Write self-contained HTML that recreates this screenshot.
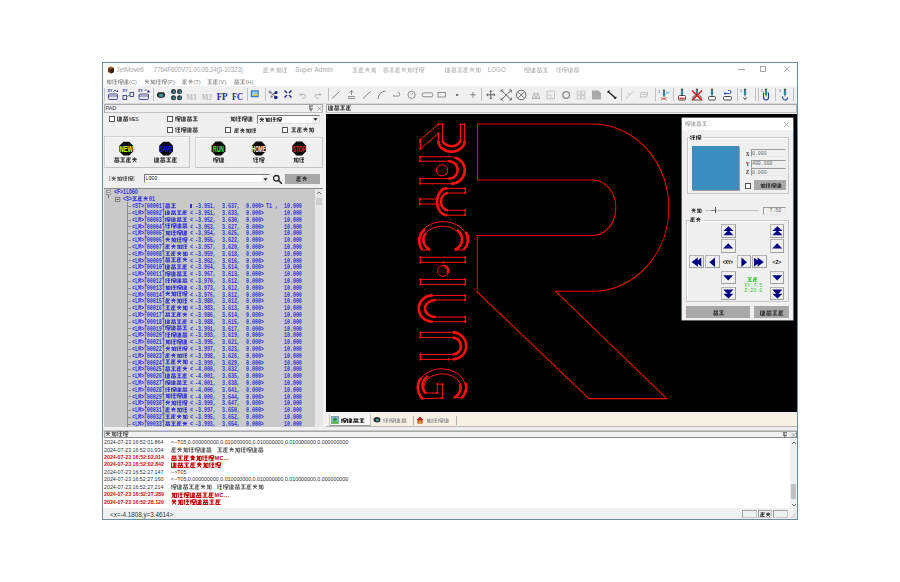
<!DOCTYPE html><html><head><meta charset="utf-8"><style>
html,body{margin:0;padding:0;background:#fff;}
body{width:900px;height:582px;position:relative;overflow:hidden;font-family:"Liberation Sans",sans-serif;}
.a{position:absolute;white-space:nowrap;}
.cj{display:inline-block;vertical-align:middle;}
.mono{font-family:"Liberation Mono",monospace;}
.serif{font-family:"Liberation Serif",serif;}
</style></head><body>
<div class="a" style="left:102px;top:62px;width:696px;height:458px;box-sizing:border-box;border:1px solid #6b8e9b;background:#f0f0f0;"></div>
<div class="a" style="left:103px;top:63px;width:694px;height:23px;background:#fff;"></div>
<svg class="a" style="left:107px;top:66px" width="8" height="8" viewBox="0 0 8 8"><path d="M1 2 L4 0.5 L7 2 L7 6 L4 7.5 L1 6Z" fill="#5a3416"/><path d="M4 3 L7 2 L7 6 L4 7.5Z" fill="#2b1a0c"/><path d="M1 2 L4 0.5 L7 2 L4 3Z" fill="#a0643a"/></svg>
<div class="a " style="left:116.5px;top:66px;font-size:6.3px;color:#a8a8a8;line-height:8px;">JetMove6</div>
<div class="a " style="left:153.8px;top:66px;font-size:6.3px;color:#a8a8a8;line-height:8px;letter-spacing:-0.15px;">7764F600V71.00.05.24(&beta;-10323)</div>
<div class="a " style="left:262.9px;top:66px;font-size:6.3px;color:#a8a8a8;line-height:8px;letter-spacing:0.15px"><svg class="cj" width="24.80" height="6.01" style="opacity:0.609;vertical-align:top;margin-top:0.99px;" fill="none" stroke="#999" stroke-width="1.5"><path transform="translate(0.00,0) scale(0.601)" d="M1 1.8h8M5 0.8v8.4M2 5h6M1 9h8M2.5 2.8l-1.5 6"/><path transform="translate(6.20,0) scale(0.601)" d="M2 1.5l6 7.5M8 1.5l-6 7.5M1 4.5h8M5 0.6v4"/><path transform="translate(12.40,0) scale(0.601)" d="M1 3h4v6M3 1v7l-2 1.5M6 2h3v7h-3z"/><path transform="translate(18.60,0) scale(0.601)" d="M2 0.8l-1.2 3M1.8 2.5v7M4 1.5h5M4 4.5h5M6.5 1.5v8M4 9h5"/></svg><span style="display:inline-block;width:7.6px"></span>Super Admin</div>
<div class="a " style="left:351.6px;top:66px;font-size:6.3px;color:#a8a8a8;line-height:8px;"><svg class="cj" width="24.80" height="6.01" style="opacity:0.609;vertical-align:top;margin-top:0.99px;" fill="none" stroke="#999" stroke-width="1.5"><path transform="translate(0.00,0) scale(0.601)" d="M1 1.6h8M5 1.6v7M0.6 8.6h8.8M2.5 5h5"/><path transform="translate(6.20,0) scale(0.601)" d="M1 1.8h8M5 0.8v8.4M2 5h6M1 9h8M2.5 2.8l-1.5 6"/><path transform="translate(12.40,0) scale(0.601)" d="M2 1.5l6 7.5M8 1.5l-6 7.5M1 4.5h8M5 0.6v4"/><path transform="translate(18.60,0) scale(0.601)" d="M1 3h4v6M3 1v7l-2 1.5M6 2h3v7h-3z"/></svg><span style="display:inline-block;width:7px"></span><svg class="cj" width="41.65" height="5.77" style="opacity:0.609;vertical-align:top;margin-top:1.11px;" fill="none" stroke="#999" stroke-width="1.5"><path transform="translate(0.00,0) scale(0.577)" d="M0.8 2h8.4M3 0.8v4M7 0.8v4M1.5 5.5h7v3.5h-7zM5 5.5v3.5"/><path transform="translate(5.95,0) scale(0.577)" d="M1 1.6h8M5 1.6v7M0.6 8.6h8.8M2.5 5h5"/><path transform="translate(11.90,0) scale(0.577)" d="M1 1.8h8M5 0.8v8.4M2 5h6M1 9h8M2.5 2.8l-1.5 6"/><path transform="translate(17.85,0) scale(0.577)" d="M2 1.5l6 7.5M8 1.5l-6 7.5M1 4.5h8M5 0.6v4"/><path transform="translate(23.80,0) scale(0.577)" d="M1 3h4v6M3 1v7l-2 1.5M6 2h3v7h-3z"/><path transform="translate(29.75,0) scale(0.577)" d="M2 0.8l-1.2 3M1.8 2.5v7M4 1.5h5M4 4.5h5M6.5 1.5v8M4 9h5"/><path transform="translate(35.70,0) scale(0.577)" d="M1.5 1v8M0.3 3.5h3M4 1.2h5v3.6h-5zM4 6.2h5M6.5 6.2v3M4 9h5"/></svg></div>
<div class="a " style="left:444.7px;top:66px;font-size:6.3px;color:#a8a8a8;line-height:8px;"><svg class="cj" width="36.00" height="5.82" style="opacity:0.609;vertical-align:top;margin-top:1.09px;" fill="none" stroke="#999" stroke-width="1.5"><path transform="translate(0.00,0) scale(0.582)" d="M1 1v8h8M3 2h5v3h-5M5.5 1v8M3 7h6"/><path transform="translate(6.00,0) scale(0.582)" d="M0.8 2h8.4M3 0.8v4M7 0.8v4M1.5 5.5h7v3.5h-7zM5 5.5v3.5"/><path transform="translate(12.00,0) scale(0.582)" d="M1 1.6h8M5 1.6v7M0.6 8.6h8.8M2.5 5h5"/><path transform="translate(18.00,0) scale(0.582)" d="M1 1.8h8M5 0.8v8.4M2 5h6M1 9h8M2.5 2.8l-1.5 6"/><path transform="translate(24.00,0) scale(0.582)" d="M2 1.5l6 7.5M8 1.5l-6 7.5M1 4.5h8M5 0.6v4"/><path transform="translate(30.00,0) scale(0.582)" d="M1 3h4v6M3 1v7l-2 1.5M6 2h3v7h-3z"/></svg><span style="display:inline-block;width:7px"></span>LOGO</div>
<div class="a " style="left:523.7px;top:66px;font-size:6.3px;color:#a8a8a8;line-height:8px;"><svg class="cj" width="24.80" height="6.01" style="opacity:0.609;vertical-align:top;margin-top:0.99px;" fill="none" stroke="#999" stroke-width="1.5"><path transform="translate(0.00,0) scale(0.601)" d="M1.5 1v8M0.3 3.5h3M4 1.2h5v3.6h-5zM4 6.2h5M6.5 6.2v3M4 9h5"/><path transform="translate(6.20,0) scale(0.601)" d="M1 1v8h8M3 2h5v3h-5M5.5 1v8M3 7h6"/><path transform="translate(12.40,0) scale(0.601)" d="M0.8 2h8.4M3 0.8v4M7 0.8v4M1.5 5.5h7v3.5h-7zM5 5.5v3.5"/><path transform="translate(18.60,0) scale(0.601)" d="M1 1.6h8M5 1.6v7M0.6 8.6h8.8M2.5 5h5"/></svg><span style="display:inline-block;width:8px"></span><svg class="cj" width="23.60" height="5.72" style="opacity:0.609;vertical-align:top;margin-top:1.14px;" fill="none" stroke="#999" stroke-width="1.5"><path transform="translate(0.00,0) scale(0.572)" d="M2 0.8l-1.2 3M1.8 2.5v7M4 1.5h5M4 4.5h5M6.5 1.5v8M4 9h5"/><path transform="translate(5.90,0) scale(0.572)" d="M1.5 1v8M0.3 3.5h3M4 1.2h5v3.6h-5zM4 6.2h5M6.5 6.2v3M4 9h5"/><path transform="translate(11.80,0) scale(0.572)" d="M1 1v8h8M3 2h5v3h-5M5.5 1v8M3 7h6"/><path transform="translate(17.70,0) scale(0.572)" d="M0.8 2h8.4M3 0.8v4M7 0.8v4M1.5 5.5h7v3.5h-7zM5 5.5v3.5"/></svg></div>
<div class="a" style="left:738px;top:69px;width:7px;height:0.8px;background:#aaa;"></div>
<div class="a" style="left:760px;top:66px;width:6px;height:6px;box-sizing:border-box;border:0.8px solid #aaa;"></div>
<svg class="a" style="left:783px;top:65px" width="8" height="8"><path d="M1 1L7 7M7 1L1 7" stroke="#aaa" stroke-width="0.8"/></svg>
<div class="a " style="left:105.8px;top:77.8px;font-size:5.8px;color:#888;line-height:8px;"><svg class="cj" width="23.20" height="5.63" style="opacity:0.725;vertical-align:top;margin-top:1.19px;" fill="none" stroke="#707070" stroke-width="1.5"><path transform="translate(0.00,0) scale(0.563)" d="M1 3h4v6M3 1v7l-2 1.5M6 2h3v7h-3z"/><path transform="translate(5.80,0) scale(0.563)" d="M2 0.8l-1.2 3M1.8 2.5v7M4 1.5h5M4 4.5h5M6.5 1.5v8M4 9h5"/><path transform="translate(11.60,0) scale(0.563)" d="M1.5 1v8M0.3 3.5h3M4 1.2h5v3.6h-5zM4 6.2h5M6.5 6.2v3M4 9h5"/><path transform="translate(17.40,0) scale(0.563)" d="M1 1v8h8M3 2h5v3h-5M5.5 1v8M3 7h6"/></svg>(C)</div>
<div class="a " style="left:144px;top:77.8px;font-size:5.8px;color:#888;line-height:8px;"><svg class="cj" width="23.20" height="5.63" style="opacity:0.725;vertical-align:top;margin-top:1.19px;" fill="none" stroke="#707070" stroke-width="1.5"><path transform="translate(0.00,0) scale(0.563)" d="M2 1.5l6 7.5M8 1.5l-6 7.5M1 4.5h8M5 0.6v4"/><path transform="translate(5.80,0) scale(0.563)" d="M1 3h4v6M3 1v7l-2 1.5M6 2h3v7h-3z"/><path transform="translate(11.60,0) scale(0.563)" d="M2 0.8l-1.2 3M1.8 2.5v7M4 1.5h5M4 4.5h5M6.5 1.5v8M4 9h5"/><path transform="translate(17.40,0) scale(0.563)" d="M1.5 1v8M0.3 3.5h3M4 1.2h5v3.6h-5zM4 6.2h5M6.5 6.2v3M4 9h5"/></svg>(P)</div>
<div class="a " style="left:181.8px;top:77.8px;font-size:5.8px;color:#888;line-height:8px;"><svg class="cj" width="11.60" height="5.63" style="opacity:0.725;vertical-align:top;margin-top:1.19px;" fill="none" stroke="#707070" stroke-width="1.5"><path transform="translate(0.00,0) scale(0.563)" d="M1 1.8h8M5 0.8v8.4M2 5h6M1 9h8M2.5 2.8l-1.5 6"/><path transform="translate(5.80,0) scale(0.563)" d="M2 1.5l6 7.5M8 1.5l-6 7.5M1 4.5h8M5 0.6v4"/></svg>(T)</div>
<div class="a " style="left:207px;top:77.8px;font-size:5.8px;color:#888;line-height:8px;"><svg class="cj" width="11.60" height="5.63" style="opacity:0.725;vertical-align:top;margin-top:1.19px;" fill="none" stroke="#707070" stroke-width="1.5"><path transform="translate(0.00,0) scale(0.563)" d="M1 1.6h8M5 1.6v7M0.6 8.6h8.8M2.5 5h5"/><path transform="translate(5.80,0) scale(0.563)" d="M1 1.8h8M5 0.8v8.4M2 5h6M1 9h8M2.5 2.8l-1.5 6"/></svg>(V)</div>
<div class="a " style="left:233.8px;top:77.8px;font-size:5.8px;color:#888;line-height:8px;"><svg class="cj" width="11.60" height="5.63" style="opacity:0.725;vertical-align:top;margin-top:1.19px;" fill="none" stroke="#707070" stroke-width="1.5"><path transform="translate(0.00,0) scale(0.563)" d="M0.8 2h8.4M3 0.8v4M7 0.8v4M1.5 5.5h7v3.5h-7zM5 5.5v3.5"/><path transform="translate(5.80,0) scale(0.563)" d="M1 1.6h8M5 1.6v7M0.6 8.6h8.8M2.5 5h5"/></svg>(H)</div>
<div class="a" style="left:103px;top:86px;width:694px;height:17px;background:#f0f0f0;"></div>
<div class="a" style="left:103px;top:103px;width:694px;height:1px;background:#d8d8d8;"></div>
<div class="a" style="left:104px;top:88px;width:1px;height:13px;background:#c8c8c8;"></div>
<div class="a" style="left:153px;top:88px;width:1px;height:13px;background:#c0c0c0;"></div>
<div class="a" style="left:246.7px;top:88px;width:1px;height:13px;background:#c0c0c0;"></div>
<div class="a" style="left:264.7px;top:88px;width:1px;height:13px;background:#c0c0c0;"></div>
<div class="a" style="left:327.5px;top:88px;width:1px;height:13px;background:#c0c0c0;"></div>
<div class="a" style="left:481.3px;top:88px;width:1px;height:13px;background:#c0c0c0;"></div>
<div class="a" style="left:620.8px;top:88px;width:1px;height:13px;background:#c0c0c0;"></div>
<div class="a" style="left:655px;top:88px;width:1px;height:13px;background:#c0c0c0;"></div>
<div class="a" style="left:672.5px;top:88px;width:1px;height:13px;background:#c0c0c0;"></div>
<div class="a" style="left:736.7px;top:88px;width:1px;height:13px;background:#c0c0c0;"></div>
<div class="a" style="left:754.7px;top:88px;width:1px;height:13px;background:#c0c0c0;"></div>
<div class="a" style="left:757.5px;top:88px;width:1px;height:13px;background:#c0c0c0;"></div>
<div class="a" style="left:775px;top:88px;width:1px;height:13px;background:#c0c0c0;"></div>
<div class="a" style="left:793.3px;top:88px;width:1px;height:13px;background:#c0c0c0;"></div>
<svg class="a" style="left:0;top:0" width="900" height="582"><text x="107.5" y="92.3" font-size="3.6" font-weight="bold" fill="#1a1a8c" font-family="Liberation Sans">XY</text><path d="M113.5 91.5l1.5-1.2 1.5 1.2M117.5 90v2" stroke="#1a1a8c" stroke-width="0.9" fill="none"/><rect x="108.5" y="94" width="9" height="5.5" rx="1" fill="#e8e8f0" stroke="#3a3a90" stroke-width="0.9"/><path d="M108.5 96h9" stroke="#3a3a90" stroke-width="0.7"/><text x="122.5" y="92.3" font-size="3.6" font-weight="bold" fill="#1a1a8c" font-family="Liberation Sans">XY</text><rect x="123" y="95.5" width="3.5" height="4" fill="none" stroke="#3a3a90" stroke-width="0.9"/><rect x="130" y="92.5" width="3.5" height="4" fill="none" stroke="#3a3a90" stroke-width="0.9"/><path d="M126.5 97l3.5-2.5" stroke="#2a8a6a" stroke-width="0.8"/><text x="138" y="92.3" font-size="3.6" font-weight="bold" fill="#1a1a8c" font-family="Liberation Sans">XY</text><path d="M145 91c0-1 1-1.3 1.6-.8" stroke="#1a1a8c" stroke-width="0.8" fill="none"/><rect x="147.5" y="90.5" width="2" height="2" fill="#1a1a8c"/><rect x="139" y="94" width="9.5" height="5.5" rx="1" fill="#e8e8f0" stroke="#3a3a90" stroke-width="0.9"/><path d="M139 96h9.5" stroke="#3a3a90" stroke-width="0.7"/><ellipse cx="161" cy="95" rx="4.2" ry="3" fill="#333"/><ellipse cx="161.2" cy="95.5" rx="2.2" ry="1.4" fill="#3aa0a8"/><path d="M158 92.5h6" stroke="#555" stroke-width="0.8"/><circle cx="173.5" cy="91.5" r="2.5" fill="#333"/><circle cx="173.8" cy="91.7" r="1.2" fill="#2a9aa0"/><circle cx="179.5" cy="91.5" r="2.5" fill="#333"/><circle cx="179.8" cy="91.7" r="1.2" fill="#2a9aa0"/><circle cx="173.5" cy="97.8" r="2.5" fill="#333"/><circle cx="173.8" cy="98.0" r="1.2" fill="#2a9aa0"/><circle cx="179.5" cy="97.8" r="2.5" fill="#333"/><circle cx="179.8" cy="98.0" r="1.2" fill="#2a9aa0"/><text x="186" y="100" font-size="9.2" font-weight="bold" fill="#bcbcbc" font-family="Liberation Serif" textLength="10.7" lengthAdjust="spacingAndGlyphs">M1</text><text x="201.7" y="100" font-size="9.2" font-weight="bold" fill="#bcbcbc" font-family="Liberation Serif" textLength="10.3" lengthAdjust="spacingAndGlyphs">M2</text><text x="216.7" y="100" font-size="9.6" font-weight="bold" fill="#1e1e9a" font-family="Liberation Serif" textLength="10.8" lengthAdjust="spacingAndGlyphs">FP</text><text x="232" y="100" font-size="9.6" font-weight="bold" fill="#1e1e9a" font-family="Liberation Serif" textLength="11" lengthAdjust="spacingAndGlyphs">FC</text><rect x="250.8" y="90.3" width="7.9" height="7" fill="#2a7ad0"/><rect x="252" y="91.5" width="5.5" height="4.6" fill="#8fd0f0"/><path d="M252 96l2-2 1.5 1.2 2-1.8v2.7z" fill="#e0c030"/><path d="M269.5 91.5l3 2.5 3.5-1M272.5 94l3 3" stroke="#556" stroke-width="0.9" fill="none"/><circle cx="270" cy="92" r="1.5" fill="#889"/><circle cx="276" cy="92.5" r="1.6" fill="#1a1a8c"/><circle cx="275.8" cy="97.5" r="1.8" fill="#1a1a8c"/><circle cx="271.5" cy="96.5" r="1.2" fill="#889"/><path d="M284.5 90.5l2.5 2.5M291.5 90.5l-2.5 2.5M284.5 97.5l2.5-2.5M291.5 97.5l-2.5-2.5" stroke="#1a1a8c" stroke-width="1.3"/><path d="M300 94.5h4a1.8 1.8 0 0 1 0 3.6h-2M300 94.5l1.5-1.5M300 94.5l1.5 1.5" stroke="#aaa" stroke-width="0.8" fill="none"/><path d="M321 94.5h-4a1.8 1.8 0 0 0 0 3.6h2M321 94.5l-1.5-1.5M321 94.5l-1.5 1.5" stroke="#aaa" stroke-width="0.8" fill="none"/><path d="M332 98.5l7.5-7" stroke="#777" stroke-width="0.9"/><path d="M351.5 90.5v4.5M349.5 92.5l2-2 2 2M348 96.5h7M348 98.5h7" stroke="#777" stroke-width="0.8" fill="none"/><path d="M363 98.5l7.5-7" stroke="#777" stroke-width="0.9"/><path d="M378 99a8 8 0 0 1 7.5-8" stroke="#777" stroke-width="0.9" fill="none"/><path d="M398 92.5a1.8 1.8 0 0 1 0 3.6h-4.5v-1" stroke="#777" stroke-width="0.8" fill="none"/><circle cx="411.6" cy="94.8" r="3.6" stroke="#777" stroke-width="0.8" fill="none"/><path d="M411.6 95l1.2-2" stroke="#777" stroke-width="0.7"/><rect x="422" y="92.8" width="11" height="4" rx="2" stroke="#777" stroke-width="0.8" fill="none"/><rect x="438" y="92.5" width="7.5" height="4.5" stroke="#777" stroke-width="0.8" fill="none"/><rect x="456" y="94" width="2.2" height="2" fill="#777"/><path d="M473 92v5.6M470.2 94.8h5.6" stroke="#777" stroke-width="0.9"/><path d="M490.8 90.5v8.5M486.7 94.8h8.3M489.5 91.8l1.3-1.3 1.3 1.3M489.5 97.8l1.3 1.3 1.3-1.3M488 93.5l-1.3 1.3 1.3 1.3M493.6 93.5l1.3 1.3-1.3 1.3" stroke="#555" stroke-width="0.9" fill="none"/><path d="M501.5 90.5l9.5 9M511 90.5l-9.5 9" stroke="#555" stroke-width="0.9"/><path d="M501 90h2.5M501 90v2.5M511.5 90h-2.5M511.5 90v2.5M501 100h2.5M501 100v-2.5M511.5 100h-2.5M511.5 100v-2.5" stroke="#555" stroke-width="0.7"/><circle cx="521.2" cy="95" r="4.8" stroke="#555" stroke-width="0.9" fill="none"/><path d="M518 91.8l6.4 6.4M524.4 91.8l-6.4 6.4" stroke="#555" stroke-width="0.8"/><path d="M532 98.5l2.5-6 1 6zM536.5 98.5l1-6 2.5 6z" stroke="#999" stroke-width="0.7" fill="none"/><rect x="547" y="91" width="7.6" height="7.8" stroke="#bbb" stroke-width="0.8" fill="none"/><path d="M547 95h4v3.8" stroke="#bbb" stroke-width="0.7" fill="none"/><circle cx="566.2" cy="95" r="3.3" stroke="#888" stroke-width="1.3" fill="none"/><rect x="577" y="91" width="3.3" height="3.3" stroke="#bbb" stroke-width="0.7" fill="none"/><rect x="581.7" y="91" width="3.3" height="3.3" stroke="#bbb" stroke-width="0.7" fill="none"/><rect x="577" y="95.7" width="3.3" height="3.3" stroke="#bbb" stroke-width="0.7" fill="none"/><rect x="581.7" y="95.7" width="3.3" height="3.3" stroke="#bbb" stroke-width="0.7" fill="none"/><path d="M592 90.5h6.5l2.5 2.5v6.5h-9z" fill="#aaa"/><path d="M608 91.5l8 7" stroke="#222" stroke-width="1.4"/><path d="M607.5 92.5l2-2M614 98.5l2.5-1.5" stroke="#222" stroke-width="1.2"/><path d="M626 98.5l7.5-7" stroke="#aaa" stroke-width="0.8" stroke-dasharray="2 1"/><path d="M628 93l2 2" stroke="#aaa" stroke-width="0.7"/><path d="M641 92.5h6.5l-1 4.5h-6.5z" stroke="#aaa" stroke-width="0.7" fill="none"/><path d="M642 94.5h6" stroke="#aaa" stroke-width="0.6"/><text x="658.3" y="92.5" font-size="3.6" fill="#1a1a8c" font-family="Liberation Sans">1</text><circle cx="664" cy="90.7" r="1.2" fill="#555"/><path d="M664 91.5v6" stroke="#444" stroke-width="0.8"/><ellipse cx="664" cy="94.0" rx="1.3" ry="2.2" fill="#2a8a9a"/><path d="M661 97.5l5.5 2.5M666.5 97.5l-5.5 2.5" stroke="#d03030" stroke-width="0.7"/><path d="M666 91.5h4l-1.5 2.5h-2.5z" fill="#9ad0e8"/><circle cx="682" cy="89.7" r="1.2" fill="#555"/><path d="M682 90.5v6" stroke="#444" stroke-width="0.8"/><ellipse cx="682" cy="93.0" rx="1.3" ry="2.2" fill="#2a8a9a"/><rect x="678.5" y="95.5" width="7" height="4.5" rx="1" fill="#fff" stroke="#333" stroke-width="0.9"/><rect x="679.5" y="97.5" width="5" height="2" fill="#e05050"/><circle cx="697" cy="89.7" r="1.2" fill="#555"/><path d="M697 90.5v6" stroke="#444" stroke-width="0.8"/><ellipse cx="697" cy="93.0" rx="1.3" ry="2.2" fill="#2a8a9a"/><rect x="693" y="96" width="8" height="4" rx="1" fill="#fff" stroke="#333" stroke-width="0.9"/><path d="M692 90.5l10 10M702 90.5l-10 10" stroke="#ee1010" stroke-width="1.4"/><circle cx="712" cy="89.7" r="1.2" fill="#555"/><path d="M712 90.5v6" stroke="#444" stroke-width="0.8"/><ellipse cx="712" cy="93.0" rx="1.3" ry="2.2" fill="#2a8a9a"/><rect x="708.5" y="96.5" width="7" height="3.5" rx="1.2" fill="#fff" stroke="#333" stroke-width="0.9"/><rect x="723.5" y="96.5" width="8" height="3.5" rx="1.2" fill="#fff" stroke="#333" stroke-width="0.9"/><path d="M724 93.5h5.5a1.5 1.5 0 0 0 0-3h-1.5M724 93.5l1.5-1.2M724 93.5l1.5 1.2" stroke="#1a3ab0" stroke-width="0.9" fill="none"/><text x="740" y="92" font-size="3.6" fill="#1a1a8c" font-family="Liberation Sans">1</text><circle cx="745" cy="89.7" r="1.2" fill="#555"/><path d="M745 90.5v6" stroke="#444" stroke-width="0.8"/><ellipse cx="745" cy="93.0" rx="1.3" ry="2.2" fill="#2a8a9a"/><path d="M743.5 97.5l1.5 2 1.5-2" stroke="#222" stroke-width="0.9" fill="none"/><text x="760.8" y="92" font-size="3.6" fill="#1a1a8c" font-family="Liberation Sans">1</text><circle cx="766" cy="89.7" r="1.2" fill="#555"/><path d="M766 90.5v6" stroke="#444" stroke-width="0.8"/><ellipse cx="766" cy="93.0" rx="1.3" ry="2.2" fill="#2a8a9a"/><path d="M763.5 92.5v5a2.5 2.5 0 0 0 5 0v-5" stroke="#1a3ab0" stroke-width="1.1" fill="none"/><text x="779" y="92" font-size="3.6" fill="#1a1a8c" font-family="Liberation Sans">1</text><circle cx="785" cy="89.7" r="1.2" fill="#555"/><path d="M785 90.5v6" stroke="#444" stroke-width="0.8"/><ellipse cx="785" cy="93.0" rx="1.3" ry="2.2" fill="#2a8a9a"/><path d="M783 96.5a2.4 2.4 0 1 0 4.5 1" stroke="#1a3ab0" stroke-width="1.1" fill="none"/></svg>
<div class="a" style="left:104px;top:104px;width:219px;height:8.5px;box-sizing:border-box;border:1px solid #a8a8a8;border-right-color:#b0b0b0;border-bottom:1.5px solid #c2c2c2;background:#f0f0f0;"></div>
<div class="a " style="left:105.5px;top:105px;font-size:5.4px;line-height:7px;color:#334;">PAD</div>
<svg class="a" style="left:306px;top:105px" width="17" height="7"><path d="M3 1h4M4 1v3M3 4h4M5 4v2.5" stroke="#555" stroke-width="1"/><path d="M11.5 1.5l4 4M15.5 1.5l-4 4" stroke="#888" stroke-width="0.7"/></svg>
<div class="a" style="left:109px;top:116.2px;width:6px;height:6px;box-sizing:border-box;border:1px solid #555;background:#fff;"></div>
<div class="a " style="left:117.3px;top:115.7px;font-size:5.6px;line-height:7px;color:#222;"><svg class="cj" width="11.60" height="5.63" style="opacity:0.87;vertical-align:top;margin-top:0.69px;" fill="none" stroke="#222" stroke-width="1.7"><path transform="translate(0.00,0) scale(0.563)" d="M1 1v8h8M3 2h5v3h-5M5.5 1v8M3 7h6"/><path transform="translate(5.80,0) scale(0.563)" d="M0.8 2h8.4M3 0.8v4M7 0.8v4M1.5 5.5h7v3.5h-7zM5 5.5v3.5"/></svg><span style="font-size:4.6px;letter-spacing:-0.2px">MES</span></div>
<div class="a" style="left:166.5px;top:116.2px;width:6px;height:6px;box-sizing:border-box;border:1px solid #555;background:#fff;"></div>
<div class="a " style="left:174.7px;top:115.7px;font-size:5.6px;line-height:7px;color:#222;"><svg class="cj" width="23.20" height="5.63" style="opacity:0.87;vertical-align:top;margin-top:0.69px;" fill="none" stroke="#222" stroke-width="1.7"><path transform="translate(0.00,0) scale(0.563)" d="M1.5 1v8M0.3 3.5h3M4 1.2h5v3.6h-5zM4 6.2h5M6.5 6.2v3M4 9h5"/><path transform="translate(5.80,0) scale(0.563)" d="M1 1v8h8M3 2h5v3h-5M5.5 1v8M3 7h6"/><path transform="translate(11.60,0) scale(0.563)" d="M0.8 2h8.4M3 0.8v4M7 0.8v4M1.5 5.5h7v3.5h-7zM5 5.5v3.5"/><path transform="translate(17.40,0) scale(0.563)" d="M1 1.6h8M5 1.6v7M0.6 8.6h8.8M2.5 5h5"/></svg></div>
<div class="a" style="left:166.5px;top:127.3px;width:6px;height:6px;box-sizing:border-box;border:1px solid #555;background:#fff;"></div>
<div class="a " style="left:174.7px;top:126.8px;font-size:5.6px;line-height:7px;color:#222;"><svg class="cj" width="23.20" height="5.63" style="opacity:0.87;vertical-align:top;margin-top:0.69px;" fill="none" stroke="#222" stroke-width="1.7"><path transform="translate(0.00,0) scale(0.563)" d="M2 0.8l-1.2 3M1.8 2.5v7M4 1.5h5M4 4.5h5M6.5 1.5v8M4 9h5"/><path transform="translate(5.80,0) scale(0.563)" d="M1.5 1v8M0.3 3.5h3M4 1.2h5v3.6h-5zM4 6.2h5M6.5 6.2v3M4 9h5"/><path transform="translate(11.60,0) scale(0.563)" d="M1 1v8h8M3 2h5v3h-5M5.5 1v8M3 7h6"/><path transform="translate(17.40,0) scale(0.563)" d="M0.8 2h8.4M3 0.8v4M7 0.8v4M1.5 5.5h7v3.5h-7zM5 5.5v3.5"/></svg></div>
<div class="a " style="left:230px;top:115.7px;font-size:5.6px;line-height:7px;color:#222;"><svg class="cj" width="23.20" height="5.63" style="opacity:0.87;vertical-align:top;margin-top:0.69px;" fill="none" stroke="#222" stroke-width="1.7"><path transform="translate(0.00,0) scale(0.563)" d="M1 3h4v6M3 1v7l-2 1.5M6 2h3v7h-3z"/><path transform="translate(5.80,0) scale(0.563)" d="M2 0.8l-1.2 3M1.8 2.5v7M4 1.5h5M4 4.5h5M6.5 1.5v8M4 9h5"/><path transform="translate(11.60,0) scale(0.563)" d="M1.5 1v8M0.3 3.5h3M4 1.2h5v3.6h-5zM4 6.2h5M6.5 6.2v3M4 9h5"/><path transform="translate(17.40,0) scale(0.563)" d="M1 1v8h8M3 2h5v3h-5M5.5 1v8M3 7h6"/></svg></div>
<div class="a" style="left:256.7px;top:115px;width:63px;height:8.7px;box-sizing:border-box;border:1px solid #7a7a7a;border-bottom-color:#e0e0e0;border-right-color:#e0e0e0;background:#fff;"></div>
<div class="a " style="left:258.7px;top:115.9px;font-size:5.6px;line-height:7px;color:#222;"><svg class="cj" width="23.20" height="5.63" style="opacity:0.9425;vertical-align:top;margin-top:0.69px;" fill="none" stroke="#222" stroke-width="1.7"><path transform="translate(0.00,0) scale(0.563)" d="M2 1.5l6 7.5M8 1.5l-6 7.5M1 4.5h8M5 0.6v4"/><path transform="translate(5.80,0) scale(0.563)" d="M1 3h4v6M3 1v7l-2 1.5M6 2h3v7h-3z"/><path transform="translate(11.60,0) scale(0.563)" d="M2 0.8l-1.2 3M1.8 2.5v7M4 1.5h5M4 4.5h5M6.5 1.5v8M4 9h5"/><path transform="translate(17.40,0) scale(0.563)" d="M1.5 1v8M0.3 3.5h3M4 1.2h5v3.6h-5zM4 6.2h5M6.5 6.2v3M4 9h5"/></svg></div>
<div class="a" style="left:312px;top:116px;width:6.8px;height:6.8px;background:#f0f0f0;"></div>
<svg class="a" style="left:313px;top:118px" width="5" height="3"><path d="M0.5 0.3h4l-2 2.4z" fill="#111"/></svg>
<div class="a" style="left:224.7px;top:127.3px;width:6px;height:6px;box-sizing:border-box;border:1px solid #555;background:#fff;"></div>
<div class="a " style="left:233.7px;top:126.8px;font-size:5.6px;line-height:7px;color:#222;"><svg class="cj" width="22.80" height="5.53" style="opacity:0.87;vertical-align:top;margin-top:0.74px;" fill="none" stroke="#222" stroke-width="1.7"><path transform="translate(0.00,0) scale(0.553)" d="M1 1.8h8M5 0.8v8.4M2 5h6M1 9h8M2.5 2.8l-1.5 6"/><path transform="translate(5.70,0) scale(0.553)" d="M2 1.5l6 7.5M8 1.5l-6 7.5M1 4.5h8M5 0.6v4"/><path transform="translate(11.40,0) scale(0.553)" d="M1 3h4v6M3 1v7l-2 1.5M6 2h3v7h-3z"/><path transform="translate(17.10,0) scale(0.553)" d="M2 0.8l-1.2 3M1.8 2.5v7M4 1.5h5M4 4.5h5M6.5 1.5v8M4 9h5"/></svg></div>
<div class="a" style="left:282px;top:127.3px;width:6px;height:6px;box-sizing:border-box;border:1px solid #555;background:#fff;"></div>
<div class="a " style="left:290.7px;top:126.8px;font-size:5.6px;line-height:7px;color:#222;"><svg class="cj" width="23.20" height="5.63" style="opacity:0.87;vertical-align:top;margin-top:0.69px;" fill="none" stroke="#222" stroke-width="1.7"><path transform="translate(0.00,0) scale(0.563)" d="M1 1.6h8M5 1.6v7M0.6 8.6h8.8M2.5 5h5"/><path transform="translate(5.80,0) scale(0.563)" d="M1 1.8h8M5 0.8v8.4M2 5h6M1 9h8M2.5 2.8l-1.5 6"/><path transform="translate(11.60,0) scale(0.563)" d="M2 1.5l6 7.5M8 1.5l-6 7.5M1 4.5h8M5 0.6v4"/><path transform="translate(17.40,0) scale(0.563)" d="M1 3h4v6M3 1v7l-2 1.5M6 2h3v7h-3z"/></svg></div>
<div class="a" style="left:103.7px;top:136.4px;width:86px;height:32px;box-sizing:border-box;border:1px solid #d0d0d0;border-right-color:#c4c4c4;border-bottom-color:#c4c4c4;box-shadow:inset 1px 1px 0 #fafafa;"></div>
<div class="a" style="left:195.4px;top:136.5px;width:127.6px;height:31.7px;box-sizing:border-box;border:1px solid #d0d0d0;border-right-color:#c4c4c4;border-bottom-color:#c4c4c4;box-shadow:inset 1px 1px 0 #fafafa;"></div>
<svg class="a" style="left:0;top:0" width="900" height="582"><polygon points="133.23,151.47 129.17,155.53 123.43,155.53 119.37,151.47 119.37,145.73 123.43,141.67 129.17,141.67 133.23,145.73" fill="#0a0a0a"/><text x="126.3" y="151.7" text-anchor="middle" font-size="8.4" font-weight="bold" fill="#ffff00" font-family="Liberation Sans" textLength="13" lengthAdjust="spacingAndGlyphs">NEW</text><polygon points="173.03,151.47 168.97,155.53 163.23,155.53 159.17,151.47 159.17,145.73 163.23,141.67 168.97,141.67 173.03,145.73" fill="#0a0a0a"/><text x="166.1" y="151.7" text-anchor="middle" font-size="8.4" font-weight="bold" fill="#1818ff" font-family="Liberation Sans" textLength="13" lengthAdjust="spacingAndGlyphs">SAVE</text><polygon points="225.43,151.37 221.37,155.43 215.63,155.43 211.57,151.37 211.57,145.63 215.63,141.57 221.37,141.57 225.43,145.63" fill="#0a0a0a"/><text x="218.5" y="151.6" text-anchor="middle" font-size="8.4" font-weight="bold" fill="#20ff20" font-family="Liberation Sans" textLength="11" lengthAdjust="spacingAndGlyphs">RUN</text><polygon points="265.73,151.37 261.67,155.43 255.93,155.43 251.87,151.37 251.87,145.63 255.93,141.57 261.67,141.57 265.73,145.63" fill="#0a0a0a"/><text x="258.8" y="151.6" text-anchor="middle" font-size="8.4" font-weight="bold" fill="#ffffff" font-family="Liberation Sans" textLength="14" lengthAdjust="spacingAndGlyphs">HOME</text><polygon points="306.13,151.37 302.07,155.43 296.33,155.43 292.27,151.37 292.27,145.63 296.33,141.57 302.07,141.57 306.13,145.63" fill="#0a0a0a"/><text x="299.2" y="151.6" text-anchor="middle" font-size="8.4" font-weight="bold" fill="#ff1818" font-family="Liberation Sans" textLength="13" lengthAdjust="spacingAndGlyphs">STOP</text></svg>
<div class="a " style="left:114.4px;top:156.5px;font-size:5.6px;line-height:7px;color:#222;"><svg class="cj" width="23.60" height="5.72" style="opacity:0.899;vertical-align:top;margin-top:0.64px;" fill="none" stroke="#222" stroke-width="1.7"><path transform="translate(0.00,0) scale(0.572)" d="M0.8 2h8.4M3 0.8v4M7 0.8v4M1.5 5.5h7v3.5h-7zM5 5.5v3.5"/><path transform="translate(5.90,0) scale(0.572)" d="M1 1.6h8M5 1.6v7M0.6 8.6h8.8M2.5 5h5"/><path transform="translate(11.80,0) scale(0.572)" d="M1 1.8h8M5 0.8v8.4M2 5h6M1 9h8M2.5 2.8l-1.5 6"/><path transform="translate(17.70,0) scale(0.572)" d="M2 1.5l6 7.5M8 1.5l-6 7.5M1 4.5h8M5 0.6v4"/></svg></div>
<div class="a " style="left:154.4px;top:156.5px;font-size:5.6px;line-height:7px;color:#222;"><svg class="cj" width="23.60" height="5.72" style="opacity:0.899;vertical-align:top;margin-top:0.64px;" fill="none" stroke="#222" stroke-width="1.7"><path transform="translate(0.00,0) scale(0.572)" d="M1 1v8h8M3 2h5v3h-5M5.5 1v8M3 7h6"/><path transform="translate(5.90,0) scale(0.572)" d="M0.8 2h8.4M3 0.8v4M7 0.8v4M1.5 5.5h7v3.5h-7zM5 5.5v3.5"/><path transform="translate(11.80,0) scale(0.572)" d="M1 1.6h8M5 1.6v7M0.6 8.6h8.8M2.5 5h5"/><path transform="translate(17.70,0) scale(0.572)" d="M1 1.8h8M5 0.8v8.4M2 5h6M1 9h8M2.5 2.8l-1.5 6"/></svg></div>
<div class="a " style="left:213px;top:156.5px;font-size:5.6px;line-height:7px;color:#222;"><svg class="cj" width="11.80" height="5.72" style="opacity:0.899;vertical-align:top;margin-top:0.64px;" fill="none" stroke="#222" stroke-width="1.7"><path transform="translate(0.00,0) scale(0.572)" d="M1.5 1v8M0.3 3.5h3M4 1.2h5v3.6h-5zM4 6.2h5M6.5 6.2v3M4 9h5"/><path transform="translate(5.90,0) scale(0.572)" d="M1 1v8h8M3 2h5v3h-5M5.5 1v8M3 7h6"/></svg></div>
<div class="a " style="left:253px;top:156.5px;font-size:5.6px;line-height:7px;color:#222;"><svg class="cj" width="11.80" height="5.72" style="opacity:0.899;vertical-align:top;margin-top:0.64px;" fill="none" stroke="#222" stroke-width="1.7"><path transform="translate(0.00,0) scale(0.572)" d="M2 0.8l-1.2 3M1.8 2.5v7M4 1.5h5M4 4.5h5M6.5 1.5v8M4 9h5"/><path transform="translate(5.90,0) scale(0.572)" d="M1.5 1v8M0.3 3.5h3M4 1.2h5v3.6h-5zM4 6.2h5M6.5 6.2v3M4 9h5"/></svg></div>
<div class="a " style="left:293.4px;top:156.5px;font-size:5.6px;line-height:7px;color:#222;"><svg class="cj" width="11.80" height="5.72" style="opacity:0.899;vertical-align:top;margin-top:0.64px;" fill="none" stroke="#222" stroke-width="1.7"><path transform="translate(0.00,0) scale(0.572)" d="M1 3h4v6M3 1v7l-2 1.5M6 2h3v7h-3z"/><path transform="translate(5.90,0) scale(0.572)" d="M2 0.8l-1.2 3M1.8 2.5v7M4 1.5h5M4 4.5h5M6.5 1.5v8M4 9h5"/></svg></div>
<div class="a " style="left:109px;top:175.3px;font-size:5.6px;line-height:7px;color:#222;"><span style="color:#444">[</span><svg class="cj" width="22.40" height="5.43" style="opacity:0.7975;vertical-align:top;margin-top:0.78px;" fill="none" stroke="#333" stroke-width="1.7"><path transform="translate(0.00,0) scale(0.543)" d="M2 1.5l6 7.5M8 1.5l-6 7.5M1 4.5h8M5 0.6v4"/><path transform="translate(5.60,0) scale(0.543)" d="M1 3h4v6M3 1v7l-2 1.5M6 2h3v7h-3z"/><path transform="translate(11.20,0) scale(0.543)" d="M2 0.8l-1.2 3M1.8 2.5v7M4 1.5h5M4 4.5h5M6.5 1.5v8M4 9h5"/><path transform="translate(16.80,0) scale(0.543)" d="M1.5 1v8M0.3 3.5h3M4 1.2h5v3.6h-5zM4 6.2h5M6.5 6.2v3M4 9h5"/></svg><span style="color:#444">]</span></div>
<div class="a" style="left:143.7px;top:174px;width:126px;height:9px;box-sizing:border-box;border:1px solid #7a7a7a;border-bottom-color:#e8e8e8;border-right-color:#e8e8e8;background:#fff;"></div>
<div class="a " style="left:145.5px;top:175.6px;font-family:Liberation Mono,monospace;font-size:4.8px;line-height:6px;color:#111;">LOGO</div>
<div class="a" style="left:261.5px;top:175px;width:7px;height:7px;background:#f0f0f0;"></div>
<svg class="a" style="left:262.5px;top:177.5px" width="5" height="3"><path d="M0.5 0.3h4l-2 2.4z" fill="#111"/></svg>
<svg class="a" style="left:272px;top:173.5px" width="11" height="11"><circle cx="4.3" cy="4.3" r="2.8" stroke="#222" stroke-width="1.3" fill="none"/><path d="M6.3 6.3l3.5 3.5" stroke="#222" stroke-width="1.6"/></svg>
<div class="a" style="left:284.9px;top:174px;width:35px;height:9.7px;background:#a8a8a8;"></div>
<div class="a " style="left:296px;top:175.8px;font-size:5.6px;line-height:7px;color:#222;"><svg class="cj" width="11.60" height="5.63" style="opacity:0.87;vertical-align:top;margin-top:0.69px;" fill="none" stroke="#222" stroke-width="1.7"><path transform="translate(0.00,0) scale(0.563)" d="M1 1.8h8M5 0.8v8.4M2 5h6M1 9h8M2.5 2.8l-1.5 6"/><path transform="translate(5.80,0) scale(0.563)" d="M2 1.5l6 7.5M8 1.5l-6 7.5M1 4.5h8M5 0.6v4"/></svg></div>
<div class="a" style="left:104px;top:187.5px;width:219px;height:239.5px;background:#c9c9c9;"></div>
<div class="a" style="left:104px;top:187.5px;width:219px;height:1px;background:#8a8a8a;"></div>
<div class="a" style="left:315px;top:188.5px;width:8px;height:238px;background:#e6e6e6;"></div>
<svg class="a" style="left:316px;top:191px" width="6" height="4"><path d="M1 3l2-2 2 2" stroke="#555" stroke-width="0.8" fill="none"/></svg>
<div class="a" style="left:315.8px;top:197.5px;width:6.7px;height:7.5px;background:#cdcdcd;"></div>
<div class="a" style="left:104px;top:188.5px;width:211px;height:238.5px;overflow:hidden"><div style="position:relative;left:-104px;top:-188.5px;width:900px;height:582px"><svg class="a" style="left:105.8px;top:190px" width="5.5" height="5"><rect x="0.5" y="0.5" width="4.4" height="4" fill="#d4d4d4" stroke="#8c8c8c" stroke-width="0.8"/><path d="M1.5 2.5h2.4" stroke="#777" stroke-width="0.8"/></svg><div class="a" style="left:113.9px;top:190px;font-family:Liberation Mono,monospace;font-size:6px;line-height:6px;color:#3030e0;transform:scale(0.826,1.18);transform-origin:0 50%;font-weight:bold;">&lt;F&gt;1LOGO</div><div class="a" style="left:108.2px;top:194.8px;width:0;height:2.5px;border-left:0.8px dotted #777"></div><svg class="a" style="left:115.2px;top:197px" width="5.5" height="5"><rect x="0.5" y="0.5" width="4.4" height="4" fill="#d4d4d4" stroke="#6c6c6c" stroke-width="0.8"/><path d="M1.5 2.5h2.4" stroke="#333" stroke-width="0.8"/></svg><div class="a" style="left:123.3px;top:197px;font-family:Liberation Mono,monospace;font-size:6px;line-height:6px;color:#3030e0;transform:scale(0.826,1.18);transform-origin:0 50%;font-weight:bold;">&lt;S&gt;</div><div class="a" style="left:132.2px;top:196.23px;line-height:0"><svg class="cj" width="16.50" height="5.33" style="opacity:1.0;vertical-align:top;margin-top:0.00px;" fill="none" stroke="#3030e0" stroke-width="1.7"><path transform="translate(0.00,0) scale(0.533)" d="M1 1.6h8M5 1.6v7M0.6 8.6h8.8M2.5 5h5"/><path transform="translate(5.50,0) scale(0.533)" d="M1 1.8h8M5 0.8v8.4M2 5h6M1 9h8M2.5 2.8l-1.5 6"/><path transform="translate(11.00,0) scale(0.533)" d="M2 1.5l6 7.5M8 1.5l-6 7.5M1 4.5h8M5 0.6v4"/></svg></div><div class="a" style="left:148.6px;top:197px;font-family:Liberation Mono,monospace;font-size:6px;line-height:6px;color:#3030e0;transform:scale(0.826,1.18);transform-origin:0 50%;font-weight:bold;">01</div><div class="a" style="left:126.5px;top:201.5px;width:0;height:226px;border-left:0.9px solid #8c8c8c"></div><div class="a" style="left:127px;top:205.9px;width:4px;height:0.8px;background:#8c8c8c"></div><div class="a" style="left:132.2px;top:204.1px;font-family:Liberation Mono,monospace;font-size:6px;line-height:6px;color:#3030e0;transform:scale(0.826,1.18);transform-origin:0 50%;font-weight:bold;">&lt;ST&gt;[00001]</div><div class="a" style="left:165.3px;top:203.04px;line-height:0"><svg class="cj" width="11.40" height="5.53" style="opacity:1.0;vertical-align:top;margin-top:0.00px;" fill="none" stroke="#3030e0" stroke-width="1.7"><path transform="translate(0.00,0) scale(0.553)" d="M0.8 2h8.4M3 0.8v4M7 0.8v4M1.5 5.5h7v3.5h-7zM5 5.5v3.5"/><path transform="translate(5.70,0) scale(0.553)" d="M1 1.6h8M5 1.6v7M0.6 8.6h8.8M2.5 5h5"/></svg></div><div class="a" style="left:190px;top:204.3px;width:2.4px;height:4.2px;background:#3030e0"></div><div class="a" style="left:265.9px;top:204.1px;font-family:Liberation Mono,monospace;font-size:6px;line-height:6px;color:#3030e0;transform:scale(0.826,1.18);transform-origin:0 50%;font-weight:bold;">T1 ,</div><div class="a" style="left:195.3px;top:204.1px;font-family:Liberation Mono,monospace;font-size:6px;line-height:6px;color:#3030e0;transform:scale(0.826,1.18);transform-origin:0 50%;font-weight:bold;">-3.951,</div><div class="a" style="left:222.2px;top:204.1px;font-family:Liberation Mono,monospace;font-size:6px;line-height:6px;color:#3030e0;transform:scale(0.826,1.18);transform-origin:0 50%;font-weight:bold;">3.637,</div><div class="a" style="left:245.5px;top:204.1px;font-family:Liberation Mono,monospace;font-size:6px;line-height:6px;color:#3030e0;transform:scale(0.826,1.18);transform-origin:0 50%;font-weight:bold;">0.000&gt;</div><div class="a" style="left:284.2px;top:204.1px;font-family:Liberation Mono,monospace;font-size:6px;line-height:6px;color:#3030e0;transform:scale(0.826,1.18);transform-origin:0 50%;font-weight:bold;">10.000</div><div class="a" style="left:127px;top:212.7px;width:4px;height:0.8px;background:#8c8c8c"></div><div class="a" style="left:132.2px;top:210.9px;font-family:Liberation Mono,monospace;font-size:6px;line-height:6px;color:#3030e0;transform:scale(0.826,1.18);transform-origin:0 50%;font-weight:bold;">&lt;LM&gt;[00002]</div><div class="a" style="left:165.3px;top:209.84px;line-height:0"><svg class="cj" width="22.80" height="5.53" style="opacity:1.0;vertical-align:top;margin-top:0.00px;" fill="none" stroke="#3030e0" stroke-width="1.7"><path transform="translate(0.00,0) scale(0.553)" d="M1 1v8h8M3 2h5v3h-5M5.5 1v8M3 7h6"/><path transform="translate(5.70,0) scale(0.553)" d="M0.8 2h8.4M3 0.8v4M7 0.8v4M1.5 5.5h7v3.5h-7zM5 5.5v3.5"/><path transform="translate(11.40,0) scale(0.553)" d="M1 1.6h8M5 1.6v7M0.6 8.6h8.8M2.5 5h5"/><path transform="translate(17.10,0) scale(0.553)" d="M1 1.8h8M5 0.8v8.4M2 5h6M1 9h8M2.5 2.8l-1.5 6"/></svg></div><div class="a" style="left:190.3px;top:210.9px;font-family:Liberation Mono,monospace;font-size:6px;line-height:6px;color:#3030e0;transform:scale(0.826,1.18);transform-origin:0 50%;font-weight:bold;">&lt;</div><div class="a" style="left:195.3px;top:210.9px;font-family:Liberation Mono,monospace;font-size:6px;line-height:6px;color:#3030e0;transform:scale(0.826,1.18);transform-origin:0 50%;font-weight:bold;">-3.951,</div><div class="a" style="left:222.2px;top:210.9px;font-family:Liberation Mono,monospace;font-size:6px;line-height:6px;color:#3030e0;transform:scale(0.826,1.18);transform-origin:0 50%;font-weight:bold;">3.633,</div><div class="a" style="left:245.5px;top:210.9px;font-family:Liberation Mono,monospace;font-size:6px;line-height:6px;color:#3030e0;transform:scale(0.826,1.18);transform-origin:0 50%;font-weight:bold;">0.000&gt;</div><div class="a" style="left:284.2px;top:210.9px;font-family:Liberation Mono,monospace;font-size:6px;line-height:6px;color:#3030e0;transform:scale(0.826,1.18);transform-origin:0 50%;font-weight:bold;">10.000</div><div class="a" style="left:127px;top:219.5px;width:4px;height:0.8px;background:#8c8c8c"></div><div class="a" style="left:132.2px;top:217.7px;font-family:Liberation Mono,monospace;font-size:6px;line-height:6px;color:#3030e0;transform:scale(0.826,1.18);transform-origin:0 50%;font-weight:bold;">&lt;LM&gt;[00003]</div><div class="a" style="left:165.3px;top:216.64px;line-height:0"><svg class="cj" width="22.80" height="5.53" style="opacity:1.0;vertical-align:top;margin-top:0.00px;" fill="none" stroke="#3030e0" stroke-width="1.7"><path transform="translate(0.00,0) scale(0.553)" d="M1.5 1v8M0.3 3.5h3M4 1.2h5v3.6h-5zM4 6.2h5M6.5 6.2v3M4 9h5"/><path transform="translate(5.70,0) scale(0.553)" d="M1 1v8h8M3 2h5v3h-5M5.5 1v8M3 7h6"/><path transform="translate(11.40,0) scale(0.553)" d="M0.8 2h8.4M3 0.8v4M7 0.8v4M1.5 5.5h7v3.5h-7zM5 5.5v3.5"/><path transform="translate(17.10,0) scale(0.553)" d="M1 1.6h8M5 1.6v7M0.6 8.6h8.8M2.5 5h5"/></svg></div><div class="a" style="left:190.3px;top:217.7px;font-family:Liberation Mono,monospace;font-size:6px;line-height:6px;color:#3030e0;transform:scale(0.826,1.18);transform-origin:0 50%;font-weight:bold;">&lt;</div><div class="a" style="left:195.3px;top:217.7px;font-family:Liberation Mono,monospace;font-size:6px;line-height:6px;color:#3030e0;transform:scale(0.826,1.18);transform-origin:0 50%;font-weight:bold;">-3.952,</div><div class="a" style="left:222.2px;top:217.7px;font-family:Liberation Mono,monospace;font-size:6px;line-height:6px;color:#3030e0;transform:scale(0.826,1.18);transform-origin:0 50%;font-weight:bold;">3.630,</div><div class="a" style="left:245.5px;top:217.7px;font-family:Liberation Mono,monospace;font-size:6px;line-height:6px;color:#3030e0;transform:scale(0.826,1.18);transform-origin:0 50%;font-weight:bold;">0.000&gt;</div><div class="a" style="left:284.2px;top:217.7px;font-family:Liberation Mono,monospace;font-size:6px;line-height:6px;color:#3030e0;transform:scale(0.826,1.18);transform-origin:0 50%;font-weight:bold;">10.000</div><div class="a" style="left:127px;top:226.3px;width:4px;height:0.8px;background:#8c8c8c"></div><div class="a" style="left:132.2px;top:224.5px;font-family:Liberation Mono,monospace;font-size:6px;line-height:6px;color:#3030e0;transform:scale(0.826,1.18);transform-origin:0 50%;font-weight:bold;">&lt;LM&gt;[00004]</div><div class="a" style="left:165.3px;top:223.44px;line-height:0"><svg class="cj" width="22.80" height="5.53" style="opacity:1.0;vertical-align:top;margin-top:0.00px;" fill="none" stroke="#3030e0" stroke-width="1.7"><path transform="translate(0.00,0) scale(0.553)" d="M2 0.8l-1.2 3M1.8 2.5v7M4 1.5h5M4 4.5h5M6.5 1.5v8M4 9h5"/><path transform="translate(5.70,0) scale(0.553)" d="M1.5 1v8M0.3 3.5h3M4 1.2h5v3.6h-5zM4 6.2h5M6.5 6.2v3M4 9h5"/><path transform="translate(11.40,0) scale(0.553)" d="M1 1v8h8M3 2h5v3h-5M5.5 1v8M3 7h6"/><path transform="translate(17.10,0) scale(0.553)" d="M0.8 2h8.4M3 0.8v4M7 0.8v4M1.5 5.5h7v3.5h-7zM5 5.5v3.5"/></svg></div><div class="a" style="left:190.3px;top:224.5px;font-family:Liberation Mono,monospace;font-size:6px;line-height:6px;color:#3030e0;transform:scale(0.826,1.18);transform-origin:0 50%;font-weight:bold;">&lt;</div><div class="a" style="left:195.3px;top:224.5px;font-family:Liberation Mono,monospace;font-size:6px;line-height:6px;color:#3030e0;transform:scale(0.826,1.18);transform-origin:0 50%;font-weight:bold;">-3.953,</div><div class="a" style="left:222.2px;top:224.5px;font-family:Liberation Mono,monospace;font-size:6px;line-height:6px;color:#3030e0;transform:scale(0.826,1.18);transform-origin:0 50%;font-weight:bold;">3.627,</div><div class="a" style="left:245.5px;top:224.5px;font-family:Liberation Mono,monospace;font-size:6px;line-height:6px;color:#3030e0;transform:scale(0.826,1.18);transform-origin:0 50%;font-weight:bold;">0.000&gt;</div><div class="a" style="left:284.2px;top:224.5px;font-family:Liberation Mono,monospace;font-size:6px;line-height:6px;color:#3030e0;transform:scale(0.826,1.18);transform-origin:0 50%;font-weight:bold;">10.000</div><div class="a" style="left:127px;top:233.1px;width:4px;height:0.8px;background:#8c8c8c"></div><div class="a" style="left:132.2px;top:231.3px;font-family:Liberation Mono,monospace;font-size:6px;line-height:6px;color:#3030e0;transform:scale(0.826,1.18);transform-origin:0 50%;font-weight:bold;">&lt;LM&gt;[00005]</div><div class="a" style="left:165.3px;top:230.24px;line-height:0"><svg class="cj" width="22.80" height="5.53" style="opacity:1.0;vertical-align:top;margin-top:0.00px;" fill="none" stroke="#3030e0" stroke-width="1.7"><path transform="translate(0.00,0) scale(0.553)" d="M1 3h4v6M3 1v7l-2 1.5M6 2h3v7h-3z"/><path transform="translate(5.70,0) scale(0.553)" d="M2 0.8l-1.2 3M1.8 2.5v7M4 1.5h5M4 4.5h5M6.5 1.5v8M4 9h5"/><path transform="translate(11.40,0) scale(0.553)" d="M1.5 1v8M0.3 3.5h3M4 1.2h5v3.6h-5zM4 6.2h5M6.5 6.2v3M4 9h5"/><path transform="translate(17.10,0) scale(0.553)" d="M1 1v8h8M3 2h5v3h-5M5.5 1v8M3 7h6"/></svg></div><div class="a" style="left:190.3px;top:231.3px;font-family:Liberation Mono,monospace;font-size:6px;line-height:6px;color:#3030e0;transform:scale(0.826,1.18);transform-origin:0 50%;font-weight:bold;">&lt;</div><div class="a" style="left:195.3px;top:231.3px;font-family:Liberation Mono,monospace;font-size:6px;line-height:6px;color:#3030e0;transform:scale(0.826,1.18);transform-origin:0 50%;font-weight:bold;">-3.954,</div><div class="a" style="left:222.2px;top:231.3px;font-family:Liberation Mono,monospace;font-size:6px;line-height:6px;color:#3030e0;transform:scale(0.826,1.18);transform-origin:0 50%;font-weight:bold;">3.625,</div><div class="a" style="left:245.5px;top:231.3px;font-family:Liberation Mono,monospace;font-size:6px;line-height:6px;color:#3030e0;transform:scale(0.826,1.18);transform-origin:0 50%;font-weight:bold;">0.000&gt;</div><div class="a" style="left:284.2px;top:231.3px;font-family:Liberation Mono,monospace;font-size:6px;line-height:6px;color:#3030e0;transform:scale(0.826,1.18);transform-origin:0 50%;font-weight:bold;">10.000</div><div class="a" style="left:127px;top:239.9px;width:4px;height:0.8px;background:#8c8c8c"></div><div class="a" style="left:132.2px;top:238.1px;font-family:Liberation Mono,monospace;font-size:6px;line-height:6px;color:#3030e0;transform:scale(0.826,1.18);transform-origin:0 50%;font-weight:bold;">&lt;LM&gt;[00006]</div><div class="a" style="left:165.3px;top:237.04px;line-height:0"><svg class="cj" width="22.80" height="5.53" style="opacity:1.0;vertical-align:top;margin-top:0.00px;" fill="none" stroke="#3030e0" stroke-width="1.7"><path transform="translate(0.00,0) scale(0.553)" d="M2 1.5l6 7.5M8 1.5l-6 7.5M1 4.5h8M5 0.6v4"/><path transform="translate(5.70,0) scale(0.553)" d="M1 3h4v6M3 1v7l-2 1.5M6 2h3v7h-3z"/><path transform="translate(11.40,0) scale(0.553)" d="M2 0.8l-1.2 3M1.8 2.5v7M4 1.5h5M4 4.5h5M6.5 1.5v8M4 9h5"/><path transform="translate(17.10,0) scale(0.553)" d="M1.5 1v8M0.3 3.5h3M4 1.2h5v3.6h-5zM4 6.2h5M6.5 6.2v3M4 9h5"/></svg></div><div class="a" style="left:190.3px;top:238.1px;font-family:Liberation Mono,monospace;font-size:6px;line-height:6px;color:#3030e0;transform:scale(0.826,1.18);transform-origin:0 50%;font-weight:bold;">&lt;</div><div class="a" style="left:195.3px;top:238.1px;font-family:Liberation Mono,monospace;font-size:6px;line-height:6px;color:#3030e0;transform:scale(0.826,1.18);transform-origin:0 50%;font-weight:bold;">-3.955,</div><div class="a" style="left:222.2px;top:238.1px;font-family:Liberation Mono,monospace;font-size:6px;line-height:6px;color:#3030e0;transform:scale(0.826,1.18);transform-origin:0 50%;font-weight:bold;">3.622,</div><div class="a" style="left:245.5px;top:238.1px;font-family:Liberation Mono,monospace;font-size:6px;line-height:6px;color:#3030e0;transform:scale(0.826,1.18);transform-origin:0 50%;font-weight:bold;">0.000&gt;</div><div class="a" style="left:284.2px;top:238.1px;font-family:Liberation Mono,monospace;font-size:6px;line-height:6px;color:#3030e0;transform:scale(0.826,1.18);transform-origin:0 50%;font-weight:bold;">10.000</div><div class="a" style="left:127px;top:246.7px;width:4px;height:0.8px;background:#8c8c8c"></div><div class="a" style="left:132.2px;top:244.9px;font-family:Liberation Mono,monospace;font-size:6px;line-height:6px;color:#3030e0;transform:scale(0.826,1.18);transform-origin:0 50%;font-weight:bold;">&lt;LM&gt;[00007]</div><div class="a" style="left:165.3px;top:243.84px;line-height:0"><svg class="cj" width="22.80" height="5.53" style="opacity:1.0;vertical-align:top;margin-top:0.00px;" fill="none" stroke="#3030e0" stroke-width="1.7"><path transform="translate(0.00,0) scale(0.553)" d="M1 1.8h8M5 0.8v8.4M2 5h6M1 9h8M2.5 2.8l-1.5 6"/><path transform="translate(5.70,0) scale(0.553)" d="M2 1.5l6 7.5M8 1.5l-6 7.5M1 4.5h8M5 0.6v4"/><path transform="translate(11.40,0) scale(0.553)" d="M1 3h4v6M3 1v7l-2 1.5M6 2h3v7h-3z"/><path transform="translate(17.10,0) scale(0.553)" d="M2 0.8l-1.2 3M1.8 2.5v7M4 1.5h5M4 4.5h5M6.5 1.5v8M4 9h5"/></svg></div><div class="a" style="left:190.3px;top:244.9px;font-family:Liberation Mono,monospace;font-size:6px;line-height:6px;color:#3030e0;transform:scale(0.826,1.18);transform-origin:0 50%;font-weight:bold;">&lt;</div><div class="a" style="left:195.3px;top:244.9px;font-family:Liberation Mono,monospace;font-size:6px;line-height:6px;color:#3030e0;transform:scale(0.826,1.18);transform-origin:0 50%;font-weight:bold;">-3.957,</div><div class="a" style="left:222.2px;top:244.9px;font-family:Liberation Mono,monospace;font-size:6px;line-height:6px;color:#3030e0;transform:scale(0.826,1.18);transform-origin:0 50%;font-weight:bold;">3.620,</div><div class="a" style="left:245.5px;top:244.9px;font-family:Liberation Mono,monospace;font-size:6px;line-height:6px;color:#3030e0;transform:scale(0.826,1.18);transform-origin:0 50%;font-weight:bold;">0.000&gt;</div><div class="a" style="left:284.2px;top:244.9px;font-family:Liberation Mono,monospace;font-size:6px;line-height:6px;color:#3030e0;transform:scale(0.826,1.18);transform-origin:0 50%;font-weight:bold;">10.000</div><div class="a" style="left:127px;top:253.5px;width:4px;height:0.8px;background:#8c8c8c"></div><div class="a" style="left:132.2px;top:251.7px;font-family:Liberation Mono,monospace;font-size:6px;line-height:6px;color:#3030e0;transform:scale(0.826,1.18);transform-origin:0 50%;font-weight:bold;">&lt;LM&gt;[00008]</div><div class="a" style="left:165.3px;top:250.64px;line-height:0"><svg class="cj" width="22.80" height="5.53" style="opacity:1.0;vertical-align:top;margin-top:0.00px;" fill="none" stroke="#3030e0" stroke-width="1.7"><path transform="translate(0.00,0) scale(0.553)" d="M1 1.6h8M5 1.6v7M0.6 8.6h8.8M2.5 5h5"/><path transform="translate(5.70,0) scale(0.553)" d="M1 1.8h8M5 0.8v8.4M2 5h6M1 9h8M2.5 2.8l-1.5 6"/><path transform="translate(11.40,0) scale(0.553)" d="M2 1.5l6 7.5M8 1.5l-6 7.5M1 4.5h8M5 0.6v4"/><path transform="translate(17.10,0) scale(0.553)" d="M1 3h4v6M3 1v7l-2 1.5M6 2h3v7h-3z"/></svg></div><div class="a" style="left:190.3px;top:251.7px;font-family:Liberation Mono,monospace;font-size:6px;line-height:6px;color:#3030e0;transform:scale(0.826,1.18);transform-origin:0 50%;font-weight:bold;">&lt;</div><div class="a" style="left:195.3px;top:251.7px;font-family:Liberation Mono,monospace;font-size:6px;line-height:6px;color:#3030e0;transform:scale(0.826,1.18);transform-origin:0 50%;font-weight:bold;">-3.959,</div><div class="a" style="left:222.2px;top:251.7px;font-family:Liberation Mono,monospace;font-size:6px;line-height:6px;color:#3030e0;transform:scale(0.826,1.18);transform-origin:0 50%;font-weight:bold;">3.618,</div><div class="a" style="left:245.5px;top:251.7px;font-family:Liberation Mono,monospace;font-size:6px;line-height:6px;color:#3030e0;transform:scale(0.826,1.18);transform-origin:0 50%;font-weight:bold;">0.000&gt;</div><div class="a" style="left:284.2px;top:251.7px;font-family:Liberation Mono,monospace;font-size:6px;line-height:6px;color:#3030e0;transform:scale(0.826,1.18);transform-origin:0 50%;font-weight:bold;">10.000</div><div class="a" style="left:127px;top:260.3px;width:4px;height:0.8px;background:#8c8c8c"></div><div class="a" style="left:132.2px;top:258.5px;font-family:Liberation Mono,monospace;font-size:6px;line-height:6px;color:#3030e0;transform:scale(0.826,1.18);transform-origin:0 50%;font-weight:bold;">&lt;LM&gt;[00009]</div><div class="a" style="left:165.3px;top:257.44px;line-height:0"><svg class="cj" width="22.80" height="5.53" style="opacity:1.0;vertical-align:top;margin-top:0.00px;" fill="none" stroke="#3030e0" stroke-width="1.7"><path transform="translate(0.00,0) scale(0.553)" d="M0.8 2h8.4M3 0.8v4M7 0.8v4M1.5 5.5h7v3.5h-7zM5 5.5v3.5"/><path transform="translate(5.70,0) scale(0.553)" d="M1 1.6h8M5 1.6v7M0.6 8.6h8.8M2.5 5h5"/><path transform="translate(11.40,0) scale(0.553)" d="M1 1.8h8M5 0.8v8.4M2 5h6M1 9h8M2.5 2.8l-1.5 6"/><path transform="translate(17.10,0) scale(0.553)" d="M2 1.5l6 7.5M8 1.5l-6 7.5M1 4.5h8M5 0.6v4"/></svg></div><div class="a" style="left:190.3px;top:258.5px;font-family:Liberation Mono,monospace;font-size:6px;line-height:6px;color:#3030e0;transform:scale(0.826,1.18);transform-origin:0 50%;font-weight:bold;">&lt;</div><div class="a" style="left:195.3px;top:258.5px;font-family:Liberation Mono,monospace;font-size:6px;line-height:6px;color:#3030e0;transform:scale(0.826,1.18);transform-origin:0 50%;font-weight:bold;">-3.962,</div><div class="a" style="left:222.2px;top:258.5px;font-family:Liberation Mono,monospace;font-size:6px;line-height:6px;color:#3030e0;transform:scale(0.826,1.18);transform-origin:0 50%;font-weight:bold;">3.616,</div><div class="a" style="left:245.5px;top:258.5px;font-family:Liberation Mono,monospace;font-size:6px;line-height:6px;color:#3030e0;transform:scale(0.826,1.18);transform-origin:0 50%;font-weight:bold;">0.000&gt;</div><div class="a" style="left:284.2px;top:258.5px;font-family:Liberation Mono,monospace;font-size:6px;line-height:6px;color:#3030e0;transform:scale(0.826,1.18);transform-origin:0 50%;font-weight:bold;">10.000</div><div class="a" style="left:127px;top:267.1px;width:4px;height:0.8px;background:#8c8c8c"></div><div class="a" style="left:132.2px;top:265.3px;font-family:Liberation Mono,monospace;font-size:6px;line-height:6px;color:#3030e0;transform:scale(0.826,1.18);transform-origin:0 50%;font-weight:bold;">&lt;LM&gt;[00010]</div><div class="a" style="left:165.3px;top:264.24px;line-height:0"><svg class="cj" width="22.80" height="5.53" style="opacity:1.0;vertical-align:top;margin-top:0.00px;" fill="none" stroke="#3030e0" stroke-width="1.7"><path transform="translate(0.00,0) scale(0.553)" d="M1 1v8h8M3 2h5v3h-5M5.5 1v8M3 7h6"/><path transform="translate(5.70,0) scale(0.553)" d="M0.8 2h8.4M3 0.8v4M7 0.8v4M1.5 5.5h7v3.5h-7zM5 5.5v3.5"/><path transform="translate(11.40,0) scale(0.553)" d="M1 1.6h8M5 1.6v7M0.6 8.6h8.8M2.5 5h5"/><path transform="translate(17.10,0) scale(0.553)" d="M1 1.8h8M5 0.8v8.4M2 5h6M1 9h8M2.5 2.8l-1.5 6"/></svg></div><div class="a" style="left:190.3px;top:265.3px;font-family:Liberation Mono,monospace;font-size:6px;line-height:6px;color:#3030e0;transform:scale(0.826,1.18);transform-origin:0 50%;font-weight:bold;">&lt;</div><div class="a" style="left:195.3px;top:265.3px;font-family:Liberation Mono,monospace;font-size:6px;line-height:6px;color:#3030e0;transform:scale(0.826,1.18);transform-origin:0 50%;font-weight:bold;">-3.964,</div><div class="a" style="left:222.2px;top:265.3px;font-family:Liberation Mono,monospace;font-size:6px;line-height:6px;color:#3030e0;transform:scale(0.826,1.18);transform-origin:0 50%;font-weight:bold;">3.614,</div><div class="a" style="left:245.5px;top:265.3px;font-family:Liberation Mono,monospace;font-size:6px;line-height:6px;color:#3030e0;transform:scale(0.826,1.18);transform-origin:0 50%;font-weight:bold;">0.000&gt;</div><div class="a" style="left:284.2px;top:265.3px;font-family:Liberation Mono,monospace;font-size:6px;line-height:6px;color:#3030e0;transform:scale(0.826,1.18);transform-origin:0 50%;font-weight:bold;">10.000</div><div class="a" style="left:127px;top:273.9px;width:4px;height:0.8px;background:#8c8c8c"></div><div class="a" style="left:132.2px;top:272.1px;font-family:Liberation Mono,monospace;font-size:6px;line-height:6px;color:#3030e0;transform:scale(0.826,1.18);transform-origin:0 50%;font-weight:bold;">&lt;LM&gt;[00011]</div><div class="a" style="left:165.3px;top:271.04px;line-height:0"><svg class="cj" width="22.80" height="5.53" style="opacity:1.0;vertical-align:top;margin-top:0.00px;" fill="none" stroke="#3030e0" stroke-width="1.7"><path transform="translate(0.00,0) scale(0.553)" d="M1.5 1v8M0.3 3.5h3M4 1.2h5v3.6h-5zM4 6.2h5M6.5 6.2v3M4 9h5"/><path transform="translate(5.70,0) scale(0.553)" d="M1 1v8h8M3 2h5v3h-5M5.5 1v8M3 7h6"/><path transform="translate(11.40,0) scale(0.553)" d="M0.8 2h8.4M3 0.8v4M7 0.8v4M1.5 5.5h7v3.5h-7zM5 5.5v3.5"/><path transform="translate(17.10,0) scale(0.553)" d="M1 1.6h8M5 1.6v7M0.6 8.6h8.8M2.5 5h5"/></svg></div><div class="a" style="left:190.3px;top:272.1px;font-family:Liberation Mono,monospace;font-size:6px;line-height:6px;color:#3030e0;transform:scale(0.826,1.18);transform-origin:0 50%;font-weight:bold;">&lt;</div><div class="a" style="left:195.3px;top:272.1px;font-family:Liberation Mono,monospace;font-size:6px;line-height:6px;color:#3030e0;transform:scale(0.826,1.18);transform-origin:0 50%;font-weight:bold;">-3.967,</div><div class="a" style="left:222.2px;top:272.1px;font-family:Liberation Mono,monospace;font-size:6px;line-height:6px;color:#3030e0;transform:scale(0.826,1.18);transform-origin:0 50%;font-weight:bold;">3.613,</div><div class="a" style="left:245.5px;top:272.1px;font-family:Liberation Mono,monospace;font-size:6px;line-height:6px;color:#3030e0;transform:scale(0.826,1.18);transform-origin:0 50%;font-weight:bold;">0.000&gt;</div><div class="a" style="left:284.2px;top:272.1px;font-family:Liberation Mono,monospace;font-size:6px;line-height:6px;color:#3030e0;transform:scale(0.826,1.18);transform-origin:0 50%;font-weight:bold;">10.000</div><div class="a" style="left:127px;top:280.7px;width:4px;height:0.8px;background:#8c8c8c"></div><div class="a" style="left:132.2px;top:278.9px;font-family:Liberation Mono,monospace;font-size:6px;line-height:6px;color:#3030e0;transform:scale(0.826,1.18);transform-origin:0 50%;font-weight:bold;">&lt;LM&gt;[00012]</div><div class="a" style="left:165.3px;top:277.84px;line-height:0"><svg class="cj" width="22.80" height="5.53" style="opacity:1.0;vertical-align:top;margin-top:0.00px;" fill="none" stroke="#3030e0" stroke-width="1.7"><path transform="translate(0.00,0) scale(0.553)" d="M2 0.8l-1.2 3M1.8 2.5v7M4 1.5h5M4 4.5h5M6.5 1.5v8M4 9h5"/><path transform="translate(5.70,0) scale(0.553)" d="M1.5 1v8M0.3 3.5h3M4 1.2h5v3.6h-5zM4 6.2h5M6.5 6.2v3M4 9h5"/><path transform="translate(11.40,0) scale(0.553)" d="M1 1v8h8M3 2h5v3h-5M5.5 1v8M3 7h6"/><path transform="translate(17.10,0) scale(0.553)" d="M0.8 2h8.4M3 0.8v4M7 0.8v4M1.5 5.5h7v3.5h-7zM5 5.5v3.5"/></svg></div><div class="a" style="left:190.3px;top:278.9px;font-family:Liberation Mono,monospace;font-size:6px;line-height:6px;color:#3030e0;transform:scale(0.826,1.18);transform-origin:0 50%;font-weight:bold;">&lt;</div><div class="a" style="left:195.3px;top:278.9px;font-family:Liberation Mono,monospace;font-size:6px;line-height:6px;color:#3030e0;transform:scale(0.826,1.18);transform-origin:0 50%;font-weight:bold;">-3.970,</div><div class="a" style="left:222.2px;top:278.9px;font-family:Liberation Mono,monospace;font-size:6px;line-height:6px;color:#3030e0;transform:scale(0.826,1.18);transform-origin:0 50%;font-weight:bold;">3.612,</div><div class="a" style="left:245.5px;top:278.9px;font-family:Liberation Mono,monospace;font-size:6px;line-height:6px;color:#3030e0;transform:scale(0.826,1.18);transform-origin:0 50%;font-weight:bold;">0.000&gt;</div><div class="a" style="left:284.2px;top:278.9px;font-family:Liberation Mono,monospace;font-size:6px;line-height:6px;color:#3030e0;transform:scale(0.826,1.18);transform-origin:0 50%;font-weight:bold;">10.000</div><div class="a" style="left:127px;top:287.5px;width:4px;height:0.8px;background:#8c8c8c"></div><div class="a" style="left:132.2px;top:285.7px;font-family:Liberation Mono,monospace;font-size:6px;line-height:6px;color:#3030e0;transform:scale(0.826,1.18);transform-origin:0 50%;font-weight:bold;">&lt;LM&gt;[00013]</div><div class="a" style="left:165.3px;top:284.64px;line-height:0"><svg class="cj" width="22.80" height="5.53" style="opacity:1.0;vertical-align:top;margin-top:0.00px;" fill="none" stroke="#3030e0" stroke-width="1.7"><path transform="translate(0.00,0) scale(0.553)" d="M1 3h4v6M3 1v7l-2 1.5M6 2h3v7h-3z"/><path transform="translate(5.70,0) scale(0.553)" d="M2 0.8l-1.2 3M1.8 2.5v7M4 1.5h5M4 4.5h5M6.5 1.5v8M4 9h5"/><path transform="translate(11.40,0) scale(0.553)" d="M1.5 1v8M0.3 3.5h3M4 1.2h5v3.6h-5zM4 6.2h5M6.5 6.2v3M4 9h5"/><path transform="translate(17.10,0) scale(0.553)" d="M1 1v8h8M3 2h5v3h-5M5.5 1v8M3 7h6"/></svg></div><div class="a" style="left:190.3px;top:285.7px;font-family:Liberation Mono,monospace;font-size:6px;line-height:6px;color:#3030e0;transform:scale(0.826,1.18);transform-origin:0 50%;font-weight:bold;">&lt;</div><div class="a" style="left:195.3px;top:285.7px;font-family:Liberation Mono,monospace;font-size:6px;line-height:6px;color:#3030e0;transform:scale(0.826,1.18);transform-origin:0 50%;font-weight:bold;">-3.973,</div><div class="a" style="left:222.2px;top:285.7px;font-family:Liberation Mono,monospace;font-size:6px;line-height:6px;color:#3030e0;transform:scale(0.826,1.18);transform-origin:0 50%;font-weight:bold;">3.612,</div><div class="a" style="left:245.5px;top:285.7px;font-family:Liberation Mono,monospace;font-size:6px;line-height:6px;color:#3030e0;transform:scale(0.826,1.18);transform-origin:0 50%;font-weight:bold;">0.000&gt;</div><div class="a" style="left:284.2px;top:285.7px;font-family:Liberation Mono,monospace;font-size:6px;line-height:6px;color:#3030e0;transform:scale(0.826,1.18);transform-origin:0 50%;font-weight:bold;">10.000</div><div class="a" style="left:127px;top:294.3px;width:4px;height:0.8px;background:#8c8c8c"></div><div class="a" style="left:132.2px;top:292.5px;font-family:Liberation Mono,monospace;font-size:6px;line-height:6px;color:#3030e0;transform:scale(0.826,1.18);transform-origin:0 50%;font-weight:bold;">&lt;LM&gt;[00014]</div><div class="a" style="left:165.3px;top:291.44px;line-height:0"><svg class="cj" width="22.80" height="5.53" style="opacity:1.0;vertical-align:top;margin-top:0.00px;" fill="none" stroke="#3030e0" stroke-width="1.7"><path transform="translate(0.00,0) scale(0.553)" d="M2 1.5l6 7.5M8 1.5l-6 7.5M1 4.5h8M5 0.6v4"/><path transform="translate(5.70,0) scale(0.553)" d="M1 3h4v6M3 1v7l-2 1.5M6 2h3v7h-3z"/><path transform="translate(11.40,0) scale(0.553)" d="M2 0.8l-1.2 3M1.8 2.5v7M4 1.5h5M4 4.5h5M6.5 1.5v8M4 9h5"/><path transform="translate(17.10,0) scale(0.553)" d="M1.5 1v8M0.3 3.5h3M4 1.2h5v3.6h-5zM4 6.2h5M6.5 6.2v3M4 9h5"/></svg></div><div class="a" style="left:190.3px;top:292.5px;font-family:Liberation Mono,monospace;font-size:6px;line-height:6px;color:#3030e0;transform:scale(0.826,1.18);transform-origin:0 50%;font-weight:bold;">&lt;</div><div class="a" style="left:195.3px;top:292.5px;font-family:Liberation Mono,monospace;font-size:6px;line-height:6px;color:#3030e0;transform:scale(0.826,1.18);transform-origin:0 50%;font-weight:bold;">-3.976,</div><div class="a" style="left:222.2px;top:292.5px;font-family:Liberation Mono,monospace;font-size:6px;line-height:6px;color:#3030e0;transform:scale(0.826,1.18);transform-origin:0 50%;font-weight:bold;">3.612,</div><div class="a" style="left:245.5px;top:292.5px;font-family:Liberation Mono,monospace;font-size:6px;line-height:6px;color:#3030e0;transform:scale(0.826,1.18);transform-origin:0 50%;font-weight:bold;">0.000&gt;</div><div class="a" style="left:284.2px;top:292.5px;font-family:Liberation Mono,monospace;font-size:6px;line-height:6px;color:#3030e0;transform:scale(0.826,1.18);transform-origin:0 50%;font-weight:bold;">10.000</div><div class="a" style="left:127px;top:301.1px;width:4px;height:0.8px;background:#8c8c8c"></div><div class="a" style="left:132.2px;top:299.3px;font-family:Liberation Mono,monospace;font-size:6px;line-height:6px;color:#3030e0;transform:scale(0.826,1.18);transform-origin:0 50%;font-weight:bold;">&lt;LM&gt;[00015]</div><div class="a" style="left:165.3px;top:298.24px;line-height:0"><svg class="cj" width="22.80" height="5.53" style="opacity:1.0;vertical-align:top;margin-top:0.00px;" fill="none" stroke="#3030e0" stroke-width="1.7"><path transform="translate(0.00,0) scale(0.553)" d="M1 1.8h8M5 0.8v8.4M2 5h6M1 9h8M2.5 2.8l-1.5 6"/><path transform="translate(5.70,0) scale(0.553)" d="M2 1.5l6 7.5M8 1.5l-6 7.5M1 4.5h8M5 0.6v4"/><path transform="translate(11.40,0) scale(0.553)" d="M1 3h4v6M3 1v7l-2 1.5M6 2h3v7h-3z"/><path transform="translate(17.10,0) scale(0.553)" d="M2 0.8l-1.2 3M1.8 2.5v7M4 1.5h5M4 4.5h5M6.5 1.5v8M4 9h5"/></svg></div><div class="a" style="left:190.3px;top:299.3px;font-family:Liberation Mono,monospace;font-size:6px;line-height:6px;color:#3030e0;transform:scale(0.826,1.18);transform-origin:0 50%;font-weight:bold;">&lt;</div><div class="a" style="left:195.3px;top:299.3px;font-family:Liberation Mono,monospace;font-size:6px;line-height:6px;color:#3030e0;transform:scale(0.826,1.18);transform-origin:0 50%;font-weight:bold;">-3.980,</div><div class="a" style="left:222.2px;top:299.3px;font-family:Liberation Mono,monospace;font-size:6px;line-height:6px;color:#3030e0;transform:scale(0.826,1.18);transform-origin:0 50%;font-weight:bold;">3.612,</div><div class="a" style="left:245.5px;top:299.3px;font-family:Liberation Mono,monospace;font-size:6px;line-height:6px;color:#3030e0;transform:scale(0.826,1.18);transform-origin:0 50%;font-weight:bold;">0.000&gt;</div><div class="a" style="left:284.2px;top:299.3px;font-family:Liberation Mono,monospace;font-size:6px;line-height:6px;color:#3030e0;transform:scale(0.826,1.18);transform-origin:0 50%;font-weight:bold;">10.000</div><div class="a" style="left:127px;top:307.9px;width:4px;height:0.8px;background:#8c8c8c"></div><div class="a" style="left:132.2px;top:306.1px;font-family:Liberation Mono,monospace;font-size:6px;line-height:6px;color:#3030e0;transform:scale(0.826,1.18);transform-origin:0 50%;font-weight:bold;">&lt;LM&gt;[00016]</div><div class="a" style="left:165.3px;top:305.04px;line-height:0"><svg class="cj" width="22.80" height="5.53" style="opacity:1.0;vertical-align:top;margin-top:0.00px;" fill="none" stroke="#3030e0" stroke-width="1.7"><path transform="translate(0.00,0) scale(0.553)" d="M1 1.6h8M5 1.6v7M0.6 8.6h8.8M2.5 5h5"/><path transform="translate(5.70,0) scale(0.553)" d="M1 1.8h8M5 0.8v8.4M2 5h6M1 9h8M2.5 2.8l-1.5 6"/><path transform="translate(11.40,0) scale(0.553)" d="M2 1.5l6 7.5M8 1.5l-6 7.5M1 4.5h8M5 0.6v4"/><path transform="translate(17.10,0) scale(0.553)" d="M1 3h4v6M3 1v7l-2 1.5M6 2h3v7h-3z"/></svg></div><div class="a" style="left:190.3px;top:306.1px;font-family:Liberation Mono,monospace;font-size:6px;line-height:6px;color:#3030e0;transform:scale(0.826,1.18);transform-origin:0 50%;font-weight:bold;">&lt;</div><div class="a" style="left:195.3px;top:306.1px;font-family:Liberation Mono,monospace;font-size:6px;line-height:6px;color:#3030e0;transform:scale(0.826,1.18);transform-origin:0 50%;font-weight:bold;">-3.983,</div><div class="a" style="left:222.2px;top:306.1px;font-family:Liberation Mono,monospace;font-size:6px;line-height:6px;color:#3030e0;transform:scale(0.826,1.18);transform-origin:0 50%;font-weight:bold;">3.613,</div><div class="a" style="left:245.5px;top:306.1px;font-family:Liberation Mono,monospace;font-size:6px;line-height:6px;color:#3030e0;transform:scale(0.826,1.18);transform-origin:0 50%;font-weight:bold;">0.000&gt;</div><div class="a" style="left:284.2px;top:306.1px;font-family:Liberation Mono,monospace;font-size:6px;line-height:6px;color:#3030e0;transform:scale(0.826,1.18);transform-origin:0 50%;font-weight:bold;">10.000</div><div class="a" style="left:127px;top:314.7px;width:4px;height:0.8px;background:#8c8c8c"></div><div class="a" style="left:132.2px;top:312.9px;font-family:Liberation Mono,monospace;font-size:6px;line-height:6px;color:#3030e0;transform:scale(0.826,1.18);transform-origin:0 50%;font-weight:bold;">&lt;LM&gt;[00017]</div><div class="a" style="left:165.3px;top:311.84px;line-height:0"><svg class="cj" width="22.80" height="5.53" style="opacity:1.0;vertical-align:top;margin-top:0.00px;" fill="none" stroke="#3030e0" stroke-width="1.7"><path transform="translate(0.00,0) scale(0.553)" d="M0.8 2h8.4M3 0.8v4M7 0.8v4M1.5 5.5h7v3.5h-7zM5 5.5v3.5"/><path transform="translate(5.70,0) scale(0.553)" d="M1 1.6h8M5 1.6v7M0.6 8.6h8.8M2.5 5h5"/><path transform="translate(11.40,0) scale(0.553)" d="M1 1.8h8M5 0.8v8.4M2 5h6M1 9h8M2.5 2.8l-1.5 6"/><path transform="translate(17.10,0) scale(0.553)" d="M2 1.5l6 7.5M8 1.5l-6 7.5M1 4.5h8M5 0.6v4"/></svg></div><div class="a" style="left:190.3px;top:312.9px;font-family:Liberation Mono,monospace;font-size:6px;line-height:6px;color:#3030e0;transform:scale(0.826,1.18);transform-origin:0 50%;font-weight:bold;">&lt;</div><div class="a" style="left:195.3px;top:312.9px;font-family:Liberation Mono,monospace;font-size:6px;line-height:6px;color:#3030e0;transform:scale(0.826,1.18);transform-origin:0 50%;font-weight:bold;">-3.986,</div><div class="a" style="left:222.2px;top:312.9px;font-family:Liberation Mono,monospace;font-size:6px;line-height:6px;color:#3030e0;transform:scale(0.826,1.18);transform-origin:0 50%;font-weight:bold;">3.614,</div><div class="a" style="left:245.5px;top:312.9px;font-family:Liberation Mono,monospace;font-size:6px;line-height:6px;color:#3030e0;transform:scale(0.826,1.18);transform-origin:0 50%;font-weight:bold;">0.000&gt;</div><div class="a" style="left:284.2px;top:312.9px;font-family:Liberation Mono,monospace;font-size:6px;line-height:6px;color:#3030e0;transform:scale(0.826,1.18);transform-origin:0 50%;font-weight:bold;">10.000</div><div class="a" style="left:127px;top:321.5px;width:4px;height:0.8px;background:#8c8c8c"></div><div class="a" style="left:132.2px;top:319.7px;font-family:Liberation Mono,monospace;font-size:6px;line-height:6px;color:#3030e0;transform:scale(0.826,1.18);transform-origin:0 50%;font-weight:bold;">&lt;LM&gt;[00018]</div><div class="a" style="left:165.3px;top:318.64px;line-height:0"><svg class="cj" width="22.80" height="5.53" style="opacity:1.0;vertical-align:top;margin-top:0.00px;" fill="none" stroke="#3030e0" stroke-width="1.7"><path transform="translate(0.00,0) scale(0.553)" d="M1 1v8h8M3 2h5v3h-5M5.5 1v8M3 7h6"/><path transform="translate(5.70,0) scale(0.553)" d="M0.8 2h8.4M3 0.8v4M7 0.8v4M1.5 5.5h7v3.5h-7zM5 5.5v3.5"/><path transform="translate(11.40,0) scale(0.553)" d="M1 1.6h8M5 1.6v7M0.6 8.6h8.8M2.5 5h5"/><path transform="translate(17.10,0) scale(0.553)" d="M1 1.8h8M5 0.8v8.4M2 5h6M1 9h8M2.5 2.8l-1.5 6"/></svg></div><div class="a" style="left:190.3px;top:319.7px;font-family:Liberation Mono,monospace;font-size:6px;line-height:6px;color:#3030e0;transform:scale(0.826,1.18);transform-origin:0 50%;font-weight:bold;">&lt;</div><div class="a" style="left:195.3px;top:319.7px;font-family:Liberation Mono,monospace;font-size:6px;line-height:6px;color:#3030e0;transform:scale(0.826,1.18);transform-origin:0 50%;font-weight:bold;">-3.988,</div><div class="a" style="left:222.2px;top:319.7px;font-family:Liberation Mono,monospace;font-size:6px;line-height:6px;color:#3030e0;transform:scale(0.826,1.18);transform-origin:0 50%;font-weight:bold;">3.615,</div><div class="a" style="left:245.5px;top:319.7px;font-family:Liberation Mono,monospace;font-size:6px;line-height:6px;color:#3030e0;transform:scale(0.826,1.18);transform-origin:0 50%;font-weight:bold;">0.000&gt;</div><div class="a" style="left:284.2px;top:319.7px;font-family:Liberation Mono,monospace;font-size:6px;line-height:6px;color:#3030e0;transform:scale(0.826,1.18);transform-origin:0 50%;font-weight:bold;">10.000</div><div class="a" style="left:127px;top:328.3px;width:4px;height:0.8px;background:#8c8c8c"></div><div class="a" style="left:132.2px;top:326.5px;font-family:Liberation Mono,monospace;font-size:6px;line-height:6px;color:#3030e0;transform:scale(0.826,1.18);transform-origin:0 50%;font-weight:bold;">&lt;LM&gt;[00019]</div><div class="a" style="left:165.3px;top:325.44px;line-height:0"><svg class="cj" width="22.80" height="5.53" style="opacity:1.0;vertical-align:top;margin-top:0.00px;" fill="none" stroke="#3030e0" stroke-width="1.7"><path transform="translate(0.00,0) scale(0.553)" d="M1.5 1v8M0.3 3.5h3M4 1.2h5v3.6h-5zM4 6.2h5M6.5 6.2v3M4 9h5"/><path transform="translate(5.70,0) scale(0.553)" d="M1 1v8h8M3 2h5v3h-5M5.5 1v8M3 7h6"/><path transform="translate(11.40,0) scale(0.553)" d="M0.8 2h8.4M3 0.8v4M7 0.8v4M1.5 5.5h7v3.5h-7zM5 5.5v3.5"/><path transform="translate(17.10,0) scale(0.553)" d="M1 1.6h8M5 1.6v7M0.6 8.6h8.8M2.5 5h5"/></svg></div><div class="a" style="left:190.3px;top:326.5px;font-family:Liberation Mono,monospace;font-size:6px;line-height:6px;color:#3030e0;transform:scale(0.826,1.18);transform-origin:0 50%;font-weight:bold;">&lt;</div><div class="a" style="left:195.3px;top:326.5px;font-family:Liberation Mono,monospace;font-size:6px;line-height:6px;color:#3030e0;transform:scale(0.826,1.18);transform-origin:0 50%;font-weight:bold;">-3.991,</div><div class="a" style="left:222.2px;top:326.5px;font-family:Liberation Mono,monospace;font-size:6px;line-height:6px;color:#3030e0;transform:scale(0.826,1.18);transform-origin:0 50%;font-weight:bold;">3.617,</div><div class="a" style="left:245.5px;top:326.5px;font-family:Liberation Mono,monospace;font-size:6px;line-height:6px;color:#3030e0;transform:scale(0.826,1.18);transform-origin:0 50%;font-weight:bold;">0.000&gt;</div><div class="a" style="left:284.2px;top:326.5px;font-family:Liberation Mono,monospace;font-size:6px;line-height:6px;color:#3030e0;transform:scale(0.826,1.18);transform-origin:0 50%;font-weight:bold;">10.000</div><div class="a" style="left:127px;top:335.1px;width:4px;height:0.8px;background:#8c8c8c"></div><div class="a" style="left:132.2px;top:333.3px;font-family:Liberation Mono,monospace;font-size:6px;line-height:6px;color:#3030e0;transform:scale(0.826,1.18);transform-origin:0 50%;font-weight:bold;">&lt;LM&gt;[00020]</div><div class="a" style="left:165.3px;top:332.24px;line-height:0"><svg class="cj" width="22.80" height="5.53" style="opacity:1.0;vertical-align:top;margin-top:0.00px;" fill="none" stroke="#3030e0" stroke-width="1.7"><path transform="translate(0.00,0) scale(0.553)" d="M2 0.8l-1.2 3M1.8 2.5v7M4 1.5h5M4 4.5h5M6.5 1.5v8M4 9h5"/><path transform="translate(5.70,0) scale(0.553)" d="M1.5 1v8M0.3 3.5h3M4 1.2h5v3.6h-5zM4 6.2h5M6.5 6.2v3M4 9h5"/><path transform="translate(11.40,0) scale(0.553)" d="M1 1v8h8M3 2h5v3h-5M5.5 1v8M3 7h6"/><path transform="translate(17.10,0) scale(0.553)" d="M0.8 2h8.4M3 0.8v4M7 0.8v4M1.5 5.5h7v3.5h-7zM5 5.5v3.5"/></svg></div><div class="a" style="left:190.3px;top:333.3px;font-family:Liberation Mono,monospace;font-size:6px;line-height:6px;color:#3030e0;transform:scale(0.826,1.18);transform-origin:0 50%;font-weight:bold;">&lt;</div><div class="a" style="left:195.3px;top:333.3px;font-family:Liberation Mono,monospace;font-size:6px;line-height:6px;color:#3030e0;transform:scale(0.826,1.18);transform-origin:0 50%;font-weight:bold;">-3.993,</div><div class="a" style="left:222.2px;top:333.3px;font-family:Liberation Mono,monospace;font-size:6px;line-height:6px;color:#3030e0;transform:scale(0.826,1.18);transform-origin:0 50%;font-weight:bold;">3.619,</div><div class="a" style="left:245.5px;top:333.3px;font-family:Liberation Mono,monospace;font-size:6px;line-height:6px;color:#3030e0;transform:scale(0.826,1.18);transform-origin:0 50%;font-weight:bold;">0.000&gt;</div><div class="a" style="left:284.2px;top:333.3px;font-family:Liberation Mono,monospace;font-size:6px;line-height:6px;color:#3030e0;transform:scale(0.826,1.18);transform-origin:0 50%;font-weight:bold;">10.000</div><div class="a" style="left:127px;top:341.9px;width:4px;height:0.8px;background:#8c8c8c"></div><div class="a" style="left:132.2px;top:340.1px;font-family:Liberation Mono,monospace;font-size:6px;line-height:6px;color:#3030e0;transform:scale(0.826,1.18);transform-origin:0 50%;font-weight:bold;">&lt;LM&gt;[00021]</div><div class="a" style="left:165.3px;top:339.04px;line-height:0"><svg class="cj" width="22.80" height="5.53" style="opacity:1.0;vertical-align:top;margin-top:0.00px;" fill="none" stroke="#3030e0" stroke-width="1.7"><path transform="translate(0.00,0) scale(0.553)" d="M1 3h4v6M3 1v7l-2 1.5M6 2h3v7h-3z"/><path transform="translate(5.70,0) scale(0.553)" d="M2 0.8l-1.2 3M1.8 2.5v7M4 1.5h5M4 4.5h5M6.5 1.5v8M4 9h5"/><path transform="translate(11.40,0) scale(0.553)" d="M1.5 1v8M0.3 3.5h3M4 1.2h5v3.6h-5zM4 6.2h5M6.5 6.2v3M4 9h5"/><path transform="translate(17.10,0) scale(0.553)" d="M1 1v8h8M3 2h5v3h-5M5.5 1v8M3 7h6"/></svg></div><div class="a" style="left:190.3px;top:340.1px;font-family:Liberation Mono,monospace;font-size:6px;line-height:6px;color:#3030e0;transform:scale(0.826,1.18);transform-origin:0 50%;font-weight:bold;">&lt;</div><div class="a" style="left:195.3px;top:340.1px;font-family:Liberation Mono,monospace;font-size:6px;line-height:6px;color:#3030e0;transform:scale(0.826,1.18);transform-origin:0 50%;font-weight:bold;">-3.995,</div><div class="a" style="left:222.2px;top:340.1px;font-family:Liberation Mono,monospace;font-size:6px;line-height:6px;color:#3030e0;transform:scale(0.826,1.18);transform-origin:0 50%;font-weight:bold;">3.621,</div><div class="a" style="left:245.5px;top:340.1px;font-family:Liberation Mono,monospace;font-size:6px;line-height:6px;color:#3030e0;transform:scale(0.826,1.18);transform-origin:0 50%;font-weight:bold;">0.000&gt;</div><div class="a" style="left:284.2px;top:340.1px;font-family:Liberation Mono,monospace;font-size:6px;line-height:6px;color:#3030e0;transform:scale(0.826,1.18);transform-origin:0 50%;font-weight:bold;">10.000</div><div class="a" style="left:127px;top:348.7px;width:4px;height:0.8px;background:#8c8c8c"></div><div class="a" style="left:132.2px;top:346.9px;font-family:Liberation Mono,monospace;font-size:6px;line-height:6px;color:#3030e0;transform:scale(0.826,1.18);transform-origin:0 50%;font-weight:bold;">&lt;LM&gt;[00022]</div><div class="a" style="left:165.3px;top:345.84px;line-height:0"><svg class="cj" width="22.80" height="5.53" style="opacity:1.0;vertical-align:top;margin-top:0.00px;" fill="none" stroke="#3030e0" stroke-width="1.7"><path transform="translate(0.00,0) scale(0.553)" d="M2 1.5l6 7.5M8 1.5l-6 7.5M1 4.5h8M5 0.6v4"/><path transform="translate(5.70,0) scale(0.553)" d="M1 3h4v6M3 1v7l-2 1.5M6 2h3v7h-3z"/><path transform="translate(11.40,0) scale(0.553)" d="M2 0.8l-1.2 3M1.8 2.5v7M4 1.5h5M4 4.5h5M6.5 1.5v8M4 9h5"/><path transform="translate(17.10,0) scale(0.553)" d="M1.5 1v8M0.3 3.5h3M4 1.2h5v3.6h-5zM4 6.2h5M6.5 6.2v3M4 9h5"/></svg></div><div class="a" style="left:190.3px;top:346.9px;font-family:Liberation Mono,monospace;font-size:6px;line-height:6px;color:#3030e0;transform:scale(0.826,1.18);transform-origin:0 50%;font-weight:bold;">&lt;</div><div class="a" style="left:195.3px;top:346.9px;font-family:Liberation Mono,monospace;font-size:6px;line-height:6px;color:#3030e0;transform:scale(0.826,1.18);transform-origin:0 50%;font-weight:bold;">-3.997,</div><div class="a" style="left:222.2px;top:346.9px;font-family:Liberation Mono,monospace;font-size:6px;line-height:6px;color:#3030e0;transform:scale(0.826,1.18);transform-origin:0 50%;font-weight:bold;">3.623,</div><div class="a" style="left:245.5px;top:346.9px;font-family:Liberation Mono,monospace;font-size:6px;line-height:6px;color:#3030e0;transform:scale(0.826,1.18);transform-origin:0 50%;font-weight:bold;">0.000&gt;</div><div class="a" style="left:284.2px;top:346.9px;font-family:Liberation Mono,monospace;font-size:6px;line-height:6px;color:#3030e0;transform:scale(0.826,1.18);transform-origin:0 50%;font-weight:bold;">10.000</div><div class="a" style="left:127px;top:355.5px;width:4px;height:0.8px;background:#8c8c8c"></div><div class="a" style="left:132.2px;top:353.7px;font-family:Liberation Mono,monospace;font-size:6px;line-height:6px;color:#3030e0;transform:scale(0.826,1.18);transform-origin:0 50%;font-weight:bold;">&lt;LM&gt;[00023]</div><div class="a" style="left:165.3px;top:352.64px;line-height:0"><svg class="cj" width="22.80" height="5.53" style="opacity:1.0;vertical-align:top;margin-top:0.00px;" fill="none" stroke="#3030e0" stroke-width="1.7"><path transform="translate(0.00,0) scale(0.553)" d="M1 1.8h8M5 0.8v8.4M2 5h6M1 9h8M2.5 2.8l-1.5 6"/><path transform="translate(5.70,0) scale(0.553)" d="M2 1.5l6 7.5M8 1.5l-6 7.5M1 4.5h8M5 0.6v4"/><path transform="translate(11.40,0) scale(0.553)" d="M1 3h4v6M3 1v7l-2 1.5M6 2h3v7h-3z"/><path transform="translate(17.10,0) scale(0.553)" d="M2 0.8l-1.2 3M1.8 2.5v7M4 1.5h5M4 4.5h5M6.5 1.5v8M4 9h5"/></svg></div><div class="a" style="left:190.3px;top:353.7px;font-family:Liberation Mono,monospace;font-size:6px;line-height:6px;color:#3030e0;transform:scale(0.826,1.18);transform-origin:0 50%;font-weight:bold;">&lt;</div><div class="a" style="left:195.3px;top:353.7px;font-family:Liberation Mono,monospace;font-size:6px;line-height:6px;color:#3030e0;transform:scale(0.826,1.18);transform-origin:0 50%;font-weight:bold;">-3.998,</div><div class="a" style="left:222.2px;top:353.7px;font-family:Liberation Mono,monospace;font-size:6px;line-height:6px;color:#3030e0;transform:scale(0.826,1.18);transform-origin:0 50%;font-weight:bold;">3.626,</div><div class="a" style="left:245.5px;top:353.7px;font-family:Liberation Mono,monospace;font-size:6px;line-height:6px;color:#3030e0;transform:scale(0.826,1.18);transform-origin:0 50%;font-weight:bold;">0.000&gt;</div><div class="a" style="left:284.2px;top:353.7px;font-family:Liberation Mono,monospace;font-size:6px;line-height:6px;color:#3030e0;transform:scale(0.826,1.18);transform-origin:0 50%;font-weight:bold;">10.000</div><div class="a" style="left:127px;top:362.3px;width:4px;height:0.8px;background:#8c8c8c"></div><div class="a" style="left:132.2px;top:360.5px;font-family:Liberation Mono,monospace;font-size:6px;line-height:6px;color:#3030e0;transform:scale(0.826,1.18);transform-origin:0 50%;font-weight:bold;">&lt;LM&gt;[00024]</div><div class="a" style="left:165.3px;top:359.44px;line-height:0"><svg class="cj" width="22.80" height="5.53" style="opacity:1.0;vertical-align:top;margin-top:0.00px;" fill="none" stroke="#3030e0" stroke-width="1.7"><path transform="translate(0.00,0) scale(0.553)" d="M1 1.6h8M5 1.6v7M0.6 8.6h8.8M2.5 5h5"/><path transform="translate(5.70,0) scale(0.553)" d="M1 1.8h8M5 0.8v8.4M2 5h6M1 9h8M2.5 2.8l-1.5 6"/><path transform="translate(11.40,0) scale(0.553)" d="M2 1.5l6 7.5M8 1.5l-6 7.5M1 4.5h8M5 0.6v4"/><path transform="translate(17.10,0) scale(0.553)" d="M1 3h4v6M3 1v7l-2 1.5M6 2h3v7h-3z"/></svg></div><div class="a" style="left:190.3px;top:360.5px;font-family:Liberation Mono,monospace;font-size:6px;line-height:6px;color:#3030e0;transform:scale(0.826,1.18);transform-origin:0 50%;font-weight:bold;">&lt;</div><div class="a" style="left:195.3px;top:360.5px;font-family:Liberation Mono,monospace;font-size:6px;line-height:6px;color:#3030e0;transform:scale(0.826,1.18);transform-origin:0 50%;font-weight:bold;">-3.999,</div><div class="a" style="left:222.2px;top:360.5px;font-family:Liberation Mono,monospace;font-size:6px;line-height:6px;color:#3030e0;transform:scale(0.826,1.18);transform-origin:0 50%;font-weight:bold;">3.629,</div><div class="a" style="left:245.5px;top:360.5px;font-family:Liberation Mono,monospace;font-size:6px;line-height:6px;color:#3030e0;transform:scale(0.826,1.18);transform-origin:0 50%;font-weight:bold;">0.000&gt;</div><div class="a" style="left:284.2px;top:360.5px;font-family:Liberation Mono,monospace;font-size:6px;line-height:6px;color:#3030e0;transform:scale(0.826,1.18);transform-origin:0 50%;font-weight:bold;">10.000</div><div class="a" style="left:127px;top:369.1px;width:4px;height:0.8px;background:#8c8c8c"></div><div class="a" style="left:132.2px;top:367.3px;font-family:Liberation Mono,monospace;font-size:6px;line-height:6px;color:#3030e0;transform:scale(0.826,1.18);transform-origin:0 50%;font-weight:bold;">&lt;LM&gt;[00025]</div><div class="a" style="left:165.3px;top:366.24px;line-height:0"><svg class="cj" width="22.80" height="5.53" style="opacity:1.0;vertical-align:top;margin-top:0.00px;" fill="none" stroke="#3030e0" stroke-width="1.7"><path transform="translate(0.00,0) scale(0.553)" d="M0.8 2h8.4M3 0.8v4M7 0.8v4M1.5 5.5h7v3.5h-7zM5 5.5v3.5"/><path transform="translate(5.70,0) scale(0.553)" d="M1 1.6h8M5 1.6v7M0.6 8.6h8.8M2.5 5h5"/><path transform="translate(11.40,0) scale(0.553)" d="M1 1.8h8M5 0.8v8.4M2 5h6M1 9h8M2.5 2.8l-1.5 6"/><path transform="translate(17.10,0) scale(0.553)" d="M2 1.5l6 7.5M8 1.5l-6 7.5M1 4.5h8M5 0.6v4"/></svg></div><div class="a" style="left:190.3px;top:367.3px;font-family:Liberation Mono,monospace;font-size:6px;line-height:6px;color:#3030e0;transform:scale(0.826,1.18);transform-origin:0 50%;font-weight:bold;">&lt;</div><div class="a" style="left:195.3px;top:367.3px;font-family:Liberation Mono,monospace;font-size:6px;line-height:6px;color:#3030e0;transform:scale(0.826,1.18);transform-origin:0 50%;font-weight:bold;">-4.000,</div><div class="a" style="left:222.2px;top:367.3px;font-family:Liberation Mono,monospace;font-size:6px;line-height:6px;color:#3030e0;transform:scale(0.826,1.18);transform-origin:0 50%;font-weight:bold;">3.632,</div><div class="a" style="left:245.5px;top:367.3px;font-family:Liberation Mono,monospace;font-size:6px;line-height:6px;color:#3030e0;transform:scale(0.826,1.18);transform-origin:0 50%;font-weight:bold;">0.000&gt;</div><div class="a" style="left:284.2px;top:367.3px;font-family:Liberation Mono,monospace;font-size:6px;line-height:6px;color:#3030e0;transform:scale(0.826,1.18);transform-origin:0 50%;font-weight:bold;">10.000</div><div class="a" style="left:127px;top:375.9px;width:4px;height:0.8px;background:#8c8c8c"></div><div class="a" style="left:132.2px;top:374.1px;font-family:Liberation Mono,monospace;font-size:6px;line-height:6px;color:#3030e0;transform:scale(0.826,1.18);transform-origin:0 50%;font-weight:bold;">&lt;LM&gt;[00026]</div><div class="a" style="left:165.3px;top:373.04px;line-height:0"><svg class="cj" width="22.80" height="5.53" style="opacity:1.0;vertical-align:top;margin-top:0.00px;" fill="none" stroke="#3030e0" stroke-width="1.7"><path transform="translate(0.00,0) scale(0.553)" d="M1 1v8h8M3 2h5v3h-5M5.5 1v8M3 7h6"/><path transform="translate(5.70,0) scale(0.553)" d="M0.8 2h8.4M3 0.8v4M7 0.8v4M1.5 5.5h7v3.5h-7zM5 5.5v3.5"/><path transform="translate(11.40,0) scale(0.553)" d="M1 1.6h8M5 1.6v7M0.6 8.6h8.8M2.5 5h5"/><path transform="translate(17.10,0) scale(0.553)" d="M1 1.8h8M5 0.8v8.4M2 5h6M1 9h8M2.5 2.8l-1.5 6"/></svg></div><div class="a" style="left:190.3px;top:374.1px;font-family:Liberation Mono,monospace;font-size:6px;line-height:6px;color:#3030e0;transform:scale(0.826,1.18);transform-origin:0 50%;font-weight:bold;">&lt;</div><div class="a" style="left:195.3px;top:374.1px;font-family:Liberation Mono,monospace;font-size:6px;line-height:6px;color:#3030e0;transform:scale(0.826,1.18);transform-origin:0 50%;font-weight:bold;">-4.001,</div><div class="a" style="left:222.2px;top:374.1px;font-family:Liberation Mono,monospace;font-size:6px;line-height:6px;color:#3030e0;transform:scale(0.826,1.18);transform-origin:0 50%;font-weight:bold;">3.635,</div><div class="a" style="left:245.5px;top:374.1px;font-family:Liberation Mono,monospace;font-size:6px;line-height:6px;color:#3030e0;transform:scale(0.826,1.18);transform-origin:0 50%;font-weight:bold;">0.000&gt;</div><div class="a" style="left:284.2px;top:374.1px;font-family:Liberation Mono,monospace;font-size:6px;line-height:6px;color:#3030e0;transform:scale(0.826,1.18);transform-origin:0 50%;font-weight:bold;">10.000</div><div class="a" style="left:127px;top:382.7px;width:4px;height:0.8px;background:#8c8c8c"></div><div class="a" style="left:132.2px;top:380.9px;font-family:Liberation Mono,monospace;font-size:6px;line-height:6px;color:#3030e0;transform:scale(0.826,1.18);transform-origin:0 50%;font-weight:bold;">&lt;LM&gt;[00027]</div><div class="a" style="left:165.3px;top:379.84px;line-height:0"><svg class="cj" width="22.80" height="5.53" style="opacity:1.0;vertical-align:top;margin-top:0.00px;" fill="none" stroke="#3030e0" stroke-width="1.7"><path transform="translate(0.00,0) scale(0.553)" d="M1.5 1v8M0.3 3.5h3M4 1.2h5v3.6h-5zM4 6.2h5M6.5 6.2v3M4 9h5"/><path transform="translate(5.70,0) scale(0.553)" d="M1 1v8h8M3 2h5v3h-5M5.5 1v8M3 7h6"/><path transform="translate(11.40,0) scale(0.553)" d="M0.8 2h8.4M3 0.8v4M7 0.8v4M1.5 5.5h7v3.5h-7zM5 5.5v3.5"/><path transform="translate(17.10,0) scale(0.553)" d="M1 1.6h8M5 1.6v7M0.6 8.6h8.8M2.5 5h5"/></svg></div><div class="a" style="left:190.3px;top:380.9px;font-family:Liberation Mono,monospace;font-size:6px;line-height:6px;color:#3030e0;transform:scale(0.826,1.18);transform-origin:0 50%;font-weight:bold;">&lt;</div><div class="a" style="left:195.3px;top:380.9px;font-family:Liberation Mono,monospace;font-size:6px;line-height:6px;color:#3030e0;transform:scale(0.826,1.18);transform-origin:0 50%;font-weight:bold;">-4.001,</div><div class="a" style="left:222.2px;top:380.9px;font-family:Liberation Mono,monospace;font-size:6px;line-height:6px;color:#3030e0;transform:scale(0.826,1.18);transform-origin:0 50%;font-weight:bold;">3.638,</div><div class="a" style="left:245.5px;top:380.9px;font-family:Liberation Mono,monospace;font-size:6px;line-height:6px;color:#3030e0;transform:scale(0.826,1.18);transform-origin:0 50%;font-weight:bold;">0.000&gt;</div><div class="a" style="left:284.2px;top:380.9px;font-family:Liberation Mono,monospace;font-size:6px;line-height:6px;color:#3030e0;transform:scale(0.826,1.18);transform-origin:0 50%;font-weight:bold;">10.000</div><div class="a" style="left:127px;top:389.5px;width:4px;height:0.8px;background:#8c8c8c"></div><div class="a" style="left:132.2px;top:387.7px;font-family:Liberation Mono,monospace;font-size:6px;line-height:6px;color:#3030e0;transform:scale(0.826,1.18);transform-origin:0 50%;font-weight:bold;">&lt;LM&gt;[00028]</div><div class="a" style="left:165.3px;top:386.64px;line-height:0"><svg class="cj" width="22.80" height="5.53" style="opacity:1.0;vertical-align:top;margin-top:0.00px;" fill="none" stroke="#3030e0" stroke-width="1.7"><path transform="translate(0.00,0) scale(0.553)" d="M2 0.8l-1.2 3M1.8 2.5v7M4 1.5h5M4 4.5h5M6.5 1.5v8M4 9h5"/><path transform="translate(5.70,0) scale(0.553)" d="M1.5 1v8M0.3 3.5h3M4 1.2h5v3.6h-5zM4 6.2h5M6.5 6.2v3M4 9h5"/><path transform="translate(11.40,0) scale(0.553)" d="M1 1v8h8M3 2h5v3h-5M5.5 1v8M3 7h6"/><path transform="translate(17.10,0) scale(0.553)" d="M0.8 2h8.4M3 0.8v4M7 0.8v4M1.5 5.5h7v3.5h-7zM5 5.5v3.5"/></svg></div><div class="a" style="left:190.3px;top:387.7px;font-family:Liberation Mono,monospace;font-size:6px;line-height:6px;color:#3030e0;transform:scale(0.826,1.18);transform-origin:0 50%;font-weight:bold;">&lt;</div><div class="a" style="left:195.3px;top:387.7px;font-family:Liberation Mono,monospace;font-size:6px;line-height:6px;color:#3030e0;transform:scale(0.826,1.18);transform-origin:0 50%;font-weight:bold;">-4.000,</div><div class="a" style="left:222.2px;top:387.7px;font-family:Liberation Mono,monospace;font-size:6px;line-height:6px;color:#3030e0;transform:scale(0.826,1.18);transform-origin:0 50%;font-weight:bold;">3.641,</div><div class="a" style="left:245.5px;top:387.7px;font-family:Liberation Mono,monospace;font-size:6px;line-height:6px;color:#3030e0;transform:scale(0.826,1.18);transform-origin:0 50%;font-weight:bold;">0.000&gt;</div><div class="a" style="left:284.2px;top:387.7px;font-family:Liberation Mono,monospace;font-size:6px;line-height:6px;color:#3030e0;transform:scale(0.826,1.18);transform-origin:0 50%;font-weight:bold;">10.000</div><div class="a" style="left:127px;top:396.3px;width:4px;height:0.8px;background:#8c8c8c"></div><div class="a" style="left:132.2px;top:394.5px;font-family:Liberation Mono,monospace;font-size:6px;line-height:6px;color:#3030e0;transform:scale(0.826,1.18);transform-origin:0 50%;font-weight:bold;">&lt;LM&gt;[00029]</div><div class="a" style="left:165.3px;top:393.44px;line-height:0"><svg class="cj" width="22.80" height="5.53" style="opacity:1.0;vertical-align:top;margin-top:0.00px;" fill="none" stroke="#3030e0" stroke-width="1.7"><path transform="translate(0.00,0) scale(0.553)" d="M1 3h4v6M3 1v7l-2 1.5M6 2h3v7h-3z"/><path transform="translate(5.70,0) scale(0.553)" d="M2 0.8l-1.2 3M1.8 2.5v7M4 1.5h5M4 4.5h5M6.5 1.5v8M4 9h5"/><path transform="translate(11.40,0) scale(0.553)" d="M1.5 1v8M0.3 3.5h3M4 1.2h5v3.6h-5zM4 6.2h5M6.5 6.2v3M4 9h5"/><path transform="translate(17.10,0) scale(0.553)" d="M1 1v8h8M3 2h5v3h-5M5.5 1v8M3 7h6"/></svg></div><div class="a" style="left:190.3px;top:394.5px;font-family:Liberation Mono,monospace;font-size:6px;line-height:6px;color:#3030e0;transform:scale(0.826,1.18);transform-origin:0 50%;font-weight:bold;">&lt;</div><div class="a" style="left:195.3px;top:394.5px;font-family:Liberation Mono,monospace;font-size:6px;line-height:6px;color:#3030e0;transform:scale(0.826,1.18);transform-origin:0 50%;font-weight:bold;">-4.000,</div><div class="a" style="left:222.2px;top:394.5px;font-family:Liberation Mono,monospace;font-size:6px;line-height:6px;color:#3030e0;transform:scale(0.826,1.18);transform-origin:0 50%;font-weight:bold;">3.644,</div><div class="a" style="left:245.5px;top:394.5px;font-family:Liberation Mono,monospace;font-size:6px;line-height:6px;color:#3030e0;transform:scale(0.826,1.18);transform-origin:0 50%;font-weight:bold;">0.000&gt;</div><div class="a" style="left:284.2px;top:394.5px;font-family:Liberation Mono,monospace;font-size:6px;line-height:6px;color:#3030e0;transform:scale(0.826,1.18);transform-origin:0 50%;font-weight:bold;">10.000</div><div class="a" style="left:127px;top:403.1px;width:4px;height:0.8px;background:#8c8c8c"></div><div class="a" style="left:132.2px;top:401.3px;font-family:Liberation Mono,monospace;font-size:6px;line-height:6px;color:#3030e0;transform:scale(0.826,1.18);transform-origin:0 50%;font-weight:bold;">&lt;LM&gt;[00030]</div><div class="a" style="left:165.3px;top:400.24px;line-height:0"><svg class="cj" width="22.80" height="5.53" style="opacity:1.0;vertical-align:top;margin-top:0.00px;" fill="none" stroke="#3030e0" stroke-width="1.7"><path transform="translate(0.00,0) scale(0.553)" d="M2 1.5l6 7.5M8 1.5l-6 7.5M1 4.5h8M5 0.6v4"/><path transform="translate(5.70,0) scale(0.553)" d="M1 3h4v6M3 1v7l-2 1.5M6 2h3v7h-3z"/><path transform="translate(11.40,0) scale(0.553)" d="M2 0.8l-1.2 3M1.8 2.5v7M4 1.5h5M4 4.5h5M6.5 1.5v8M4 9h5"/><path transform="translate(17.10,0) scale(0.553)" d="M1.5 1v8M0.3 3.5h3M4 1.2h5v3.6h-5zM4 6.2h5M6.5 6.2v3M4 9h5"/></svg></div><div class="a" style="left:190.3px;top:401.3px;font-family:Liberation Mono,monospace;font-size:6px;line-height:6px;color:#3030e0;transform:scale(0.826,1.18);transform-origin:0 50%;font-weight:bold;">&lt;</div><div class="a" style="left:195.3px;top:401.3px;font-family:Liberation Mono,monospace;font-size:6px;line-height:6px;color:#3030e0;transform:scale(0.826,1.18);transform-origin:0 50%;font-weight:bold;">-3.999,</div><div class="a" style="left:222.2px;top:401.3px;font-family:Liberation Mono,monospace;font-size:6px;line-height:6px;color:#3030e0;transform:scale(0.826,1.18);transform-origin:0 50%;font-weight:bold;">3.647,</div><div class="a" style="left:245.5px;top:401.3px;font-family:Liberation Mono,monospace;font-size:6px;line-height:6px;color:#3030e0;transform:scale(0.826,1.18);transform-origin:0 50%;font-weight:bold;">0.000&gt;</div><div class="a" style="left:284.2px;top:401.3px;font-family:Liberation Mono,monospace;font-size:6px;line-height:6px;color:#3030e0;transform:scale(0.826,1.18);transform-origin:0 50%;font-weight:bold;">10.000</div><div class="a" style="left:127px;top:409.9px;width:4px;height:0.8px;background:#8c8c8c"></div><div class="a" style="left:132.2px;top:408.1px;font-family:Liberation Mono,monospace;font-size:6px;line-height:6px;color:#3030e0;transform:scale(0.826,1.18);transform-origin:0 50%;font-weight:bold;">&lt;LM&gt;[00031]</div><div class="a" style="left:165.3px;top:407.04px;line-height:0"><svg class="cj" width="22.80" height="5.53" style="opacity:1.0;vertical-align:top;margin-top:0.00px;" fill="none" stroke="#3030e0" stroke-width="1.7"><path transform="translate(0.00,0) scale(0.553)" d="M1 1.8h8M5 0.8v8.4M2 5h6M1 9h8M2.5 2.8l-1.5 6"/><path transform="translate(5.70,0) scale(0.553)" d="M2 1.5l6 7.5M8 1.5l-6 7.5M1 4.5h8M5 0.6v4"/><path transform="translate(11.40,0) scale(0.553)" d="M1 3h4v6M3 1v7l-2 1.5M6 2h3v7h-3z"/><path transform="translate(17.10,0) scale(0.553)" d="M2 0.8l-1.2 3M1.8 2.5v7M4 1.5h5M4 4.5h5M6.5 1.5v8M4 9h5"/></svg></div><div class="a" style="left:190.3px;top:408.1px;font-family:Liberation Mono,monospace;font-size:6px;line-height:6px;color:#3030e0;transform:scale(0.826,1.18);transform-origin:0 50%;font-weight:bold;">&lt;</div><div class="a" style="left:195.3px;top:408.1px;font-family:Liberation Mono,monospace;font-size:6px;line-height:6px;color:#3030e0;transform:scale(0.826,1.18);transform-origin:0 50%;font-weight:bold;">-3.997,</div><div class="a" style="left:222.2px;top:408.1px;font-family:Liberation Mono,monospace;font-size:6px;line-height:6px;color:#3030e0;transform:scale(0.826,1.18);transform-origin:0 50%;font-weight:bold;">3.650,</div><div class="a" style="left:245.5px;top:408.1px;font-family:Liberation Mono,monospace;font-size:6px;line-height:6px;color:#3030e0;transform:scale(0.826,1.18);transform-origin:0 50%;font-weight:bold;">0.000&gt;</div><div class="a" style="left:284.2px;top:408.1px;font-family:Liberation Mono,monospace;font-size:6px;line-height:6px;color:#3030e0;transform:scale(0.826,1.18);transform-origin:0 50%;font-weight:bold;">10.000</div><div class="a" style="left:127px;top:416.7px;width:4px;height:0.8px;background:#8c8c8c"></div><div class="a" style="left:132.2px;top:414.9px;font-family:Liberation Mono,monospace;font-size:6px;line-height:6px;color:#3030e0;transform:scale(0.826,1.18);transform-origin:0 50%;font-weight:bold;">&lt;LM&gt;[00032]</div><div class="a" style="left:165.3px;top:413.84px;line-height:0"><svg class="cj" width="22.80" height="5.53" style="opacity:1.0;vertical-align:top;margin-top:0.00px;" fill="none" stroke="#3030e0" stroke-width="1.7"><path transform="translate(0.00,0) scale(0.553)" d="M1 1.6h8M5 1.6v7M0.6 8.6h8.8M2.5 5h5"/><path transform="translate(5.70,0) scale(0.553)" d="M1 1.8h8M5 0.8v8.4M2 5h6M1 9h8M2.5 2.8l-1.5 6"/><path transform="translate(11.40,0) scale(0.553)" d="M2 1.5l6 7.5M8 1.5l-6 7.5M1 4.5h8M5 0.6v4"/><path transform="translate(17.10,0) scale(0.553)" d="M1 3h4v6M3 1v7l-2 1.5M6 2h3v7h-3z"/></svg></div><div class="a" style="left:190.3px;top:414.9px;font-family:Liberation Mono,monospace;font-size:6px;line-height:6px;color:#3030e0;transform:scale(0.826,1.18);transform-origin:0 50%;font-weight:bold;">&lt;</div><div class="a" style="left:195.3px;top:414.9px;font-family:Liberation Mono,monospace;font-size:6px;line-height:6px;color:#3030e0;transform:scale(0.826,1.18);transform-origin:0 50%;font-weight:bold;">-3.995,</div><div class="a" style="left:222.2px;top:414.9px;font-family:Liberation Mono,monospace;font-size:6px;line-height:6px;color:#3030e0;transform:scale(0.826,1.18);transform-origin:0 50%;font-weight:bold;">3.652,</div><div class="a" style="left:245.5px;top:414.9px;font-family:Liberation Mono,monospace;font-size:6px;line-height:6px;color:#3030e0;transform:scale(0.826,1.18);transform-origin:0 50%;font-weight:bold;">0.000&gt;</div><div class="a" style="left:284.2px;top:414.9px;font-family:Liberation Mono,monospace;font-size:6px;line-height:6px;color:#3030e0;transform:scale(0.826,1.18);transform-origin:0 50%;font-weight:bold;">10.000</div><div class="a" style="left:127px;top:423.5px;width:4px;height:0.8px;background:#8c8c8c"></div><div class="a" style="left:132.2px;top:421.7px;font-family:Liberation Mono,monospace;font-size:6px;line-height:6px;color:#3030e0;transform:scale(0.826,1.18);transform-origin:0 50%;font-weight:bold;">&lt;LM&gt;[00033]</div><div class="a" style="left:165.3px;top:420.64px;line-height:0"><svg class="cj" width="22.80" height="5.53" style="opacity:1.0;vertical-align:top;margin-top:0.00px;" fill="none" stroke="#3030e0" stroke-width="1.7"><path transform="translate(0.00,0) scale(0.553)" d="M0.8 2h8.4M3 0.8v4M7 0.8v4M1.5 5.5h7v3.5h-7zM5 5.5v3.5"/><path transform="translate(5.70,0) scale(0.553)" d="M1 1.6h8M5 1.6v7M0.6 8.6h8.8M2.5 5h5"/><path transform="translate(11.40,0) scale(0.553)" d="M1 1.8h8M5 0.8v8.4M2 5h6M1 9h8M2.5 2.8l-1.5 6"/><path transform="translate(17.10,0) scale(0.553)" d="M2 1.5l6 7.5M8 1.5l-6 7.5M1 4.5h8M5 0.6v4"/></svg></div><div class="a" style="left:190.3px;top:421.7px;font-family:Liberation Mono,monospace;font-size:6px;line-height:6px;color:#3030e0;transform:scale(0.826,1.18);transform-origin:0 50%;font-weight:bold;">&lt;</div><div class="a" style="left:195.3px;top:421.7px;font-family:Liberation Mono,monospace;font-size:6px;line-height:6px;color:#3030e0;transform:scale(0.826,1.18);transform-origin:0 50%;font-weight:bold;">-3.993,</div><div class="a" style="left:222.2px;top:421.7px;font-family:Liberation Mono,monospace;font-size:6px;line-height:6px;color:#3030e0;transform:scale(0.826,1.18);transform-origin:0 50%;font-weight:bold;">3.654,</div><div class="a" style="left:245.5px;top:421.7px;font-family:Liberation Mono,monospace;font-size:6px;line-height:6px;color:#3030e0;transform:scale(0.826,1.18);transform-origin:0 50%;font-weight:bold;">0.000&gt;</div><div class="a" style="left:284.2px;top:421.7px;font-family:Liberation Mono,monospace;font-size:6px;line-height:6px;color:#3030e0;transform:scale(0.826,1.18);transform-origin:0 50%;font-weight:bold;">10.000</div></div></div>
<div class="a" style="left:323px;top:103.5px;width:3px;height:324px;background:#f0f0f0;"></div>
<div class="a" style="left:326px;top:104px;width:471px;height:8.5px;box-sizing:border-box;border:1px solid #a8a8a8;border-right-color:#b0b0b0;border-bottom:1.5px solid #c2c2c2;background:#f0f0f0;"></div>
<div class="a " style="left:327.8px;top:104.6px;font-size:5.6px;line-height:7px;color:#222;"><svg class="cj" width="23.60" height="5.72" style="opacity:0.87;vertical-align:top;margin-top:0.64px;" fill="none" stroke="#111" stroke-width="1.5"><path transform="translate(0.00,0) scale(0.572)" d="M1 1v8h8M3 2h5v3h-5M5.5 1v8M3 7h6"/><path transform="translate(5.90,0) scale(0.572)" d="M0.8 2h8.4M3 0.8v4M7 0.8v4M1.5 5.5h7v3.5h-7zM5 5.5v3.5"/><path transform="translate(11.80,0) scale(0.572)" d="M1 1.6h8M5 1.6v7M0.6 8.6h8.8M2.5 5h5"/><path transform="translate(17.70,0) scale(0.572)" d="M1 1.8h8M5 0.8v8.4M2 5h6M1 9h8M2.5 2.8l-1.5 6"/></svg></div>
<div class="a" style="left:326px;top:113.8px;width:471px;height:298.2px;background:#000;"></div>
<svg class="a" style="left:326px;top:113px" width="471" height="299"><g transform="translate(-326,-113)"><path d="M477.6,124 L591,124 A76,83.65 0 0 1 594.5,291.3 L555.6,291.3 L666.8,398.6 L589,398.6 L477.2,292 L477.2,235.4 L592.7,235.4 A23,27.7 0 0 0 593,180 L477.6,180 Z" fill="none" stroke="#f00000" stroke-width="1.05"/><path d="M438.4,124.3 L442.5,124.3 L442.5,139.7 A9,6.5 0 0 0 460.5,139.7 L460.5,124.3 L464.6,124.3 L464.6,140.8 A13.1,11 0 0 1 438.4,140.8 L438.4,133.6 L420.3,149 L420.3,139.7 Z" fill="none" stroke="#ff1010" stroke-width="1.0"/><path d="M442.5,139.7 A9,6.5 0 0 0 460.5,139.7 M464.6,140.8 A13.1,11 0 0 1 438.4,140.8" fill="none" stroke="#ff1010" stroke-width="2.6"/><path d="M420,156.8 L451,156.8 A14,13.45 0 0 1 451,183.7 L420,183.7 L420,178.6 L449,178.6 A8.7,8.7 0 0 0 449,161.2 L420,161.2 Z" fill="none" stroke="#ff1010" stroke-width="1.0"/><path d="M455,157.4 A14,13.45 0 0 1 451,183.7 M449,178.6 A8.7,8.7 0 0 0 449,161.2" fill="none" stroke="#ff1010" stroke-width="2.6"/><circle cx="442" cy="170.3" r="5.6" fill="none" stroke="#ff1010" stroke-width="1.0"/><path d="M465.2,188.4 L447,188.4 A10,13.4 0 0 0 447,215.2 L465.2,215.2 L465.2,210.3 L448,210.3 A7,8.65 0 0 1 448,193 L465.2,193 Z M437.8,199 L419.8,199 L419.8,204.1 L437.8,204.1" fill="none" stroke="#ff1010" stroke-width="1.0"/><path d="M447,188.4 A10,13.4 0 0 0 447,215.2 M448,210.3 A7,8.65 0 0 1 448,193" fill="none" stroke="#ff1010" stroke-width="2.6"/><path d="M422.4,250 A24.2,18.6 0 1 1 463.6,250 L454.8,250 A19,13.5 0 1 0 430,250 Z" fill="none" stroke="#ff1010" stroke-width="1.0"/><path d="M422.4,250 A24.2,18.6 0 0 1 425,229 M454.8,250 A19,13.5 0 0 0 457,230 M430,250 A19,13.5 0 0 1 426,233 M463.6,250 A24.2,18.6 0 0 0 466,232" fill="none" stroke="#ff1010" stroke-width="2.6"/><rect x="420.3" y="257.3" width="44.9" height="5.1" fill="none" stroke="#ff1010" stroke-width="1.0"/><circle cx="443" cy="270.9" r="5.4" fill="none" stroke="#ff1010" stroke-width="1.0"/><path d="M444,265.8 A5.4,5.4 0 0 1 448,273" fill="none" stroke="#ff1010" stroke-width="2.6"/><rect x="420.3" y="279.4" width="44.9" height="5.2" fill="none" stroke="#ff1010" stroke-width="1.0"/><path d="M465.2,295.4 L432.7,295.4 A13.9,13.15 0 0 0 432.7,321.7 L465.2,321.7 L465.2,317 L435.8,317 A10.8,8.5 0 0 1 435.8,300 L465.2,300 Z" fill="none" stroke="#ff1010" stroke-width="1.0"/><path d="M432.7,295.4 A13.9,13.15 0 0 0 432.7,321.7 M435.8,317 A10.8,8.5 0 0 1 435.8,300" fill="none" stroke="#ff1010" stroke-width="2.6"/><path d="M420.3,332.4 L452.7,332.4 A13.5,13.5 0 0 1 452.7,359.4 L420.3,359.4 L420.3,354.5 L452.5,354.5 A8.5,8.5 0 0 0 452.5,337.5 L420.3,337.5 Z" fill="none" stroke="#ff1010" stroke-width="1.0"/><path d="M452.7,332.4 A13.5,13.5 0 0 1 452.7,359.4 M452.5,354.5 A8.5,8.5 0 0 0 452.5,337.5" fill="none" stroke="#ff1010" stroke-width="2.6"/><path d="M422.4,398.7 A23.7,19 0 1 1 462,397.6 L454.3,397.6 A18.6,13.5 0 1 0 425.5,393 L437.3,393 L437.3,384.2 L442.5,384.2 L442.5,398.1 Z" fill="none" stroke="#ff1010" stroke-width="1.0"/><path d="M422.4,398.7 A23.7,19 0 0 1 421,378 M462,397.6 A23.7,19 0 0 0 466,383 M454.3,397.6 A18.6,13.5 0 0 0 460,384 M425.5,393 A18.6,13.5 0 0 1 428,376" fill="none" stroke="#ff1010" stroke-width="2.6"/><circle cx="438.4" cy="124.3" r="1.15" fill="#ff1010"/><circle cx="442.5" cy="124.3" r="1.15" fill="#ff1010"/><circle cx="460.5" cy="124.3" r="1.15" fill="#ff1010"/><circle cx="464.6" cy="124.3" r="1.15" fill="#ff1010"/><circle cx="438.4" cy="133.6" r="1.15" fill="#ff1010"/><circle cx="420.3" cy="149" r="1.15" fill="#ff1010"/><circle cx="420.3" cy="139.7" r="1.15" fill="#ff1010"/><circle cx="420.3" cy="142" r="1.15" fill="#ff1010"/><circle cx="420" cy="156.8" r="1.15" fill="#ff1010"/><circle cx="420" cy="161.2" r="1.15" fill="#ff1010"/><circle cx="420" cy="178.6" r="1.15" fill="#ff1010"/><circle cx="420" cy="183.7" r="1.15" fill="#ff1010"/><circle cx="449" cy="161.2" r="1.15" fill="#ff1010"/><circle cx="449" cy="178.6" r="1.15" fill="#ff1010"/><circle cx="465.2" cy="188.4" r="1.15" fill="#ff1010"/><circle cx="465.2" cy="193" r="1.15" fill="#ff1010"/><circle cx="465.2" cy="210.3" r="1.15" fill="#ff1010"/><circle cx="465.2" cy="215.2" r="1.15" fill="#ff1010"/><circle cx="419.8" cy="199" r="1.15" fill="#ff1010"/><circle cx="419.8" cy="204.1" r="1.15" fill="#ff1010"/><circle cx="437.8" cy="204.1" r="1.15" fill="#ff1010"/><circle cx="420.3" cy="257.3" r="1.15" fill="#ff1010"/><circle cx="465.2" cy="257.3" r="1.15" fill="#ff1010"/><circle cx="420.3" cy="262.4" r="1.15" fill="#ff1010"/><circle cx="465.2" cy="262.4" r="1.15" fill="#ff1010"/><circle cx="443.5" cy="262.4" r="1.15" fill="#ff1010"/><circle cx="420.3" cy="279.4" r="1.15" fill="#ff1010"/><circle cx="465.2" cy="279.4" r="1.15" fill="#ff1010"/><circle cx="420.3" cy="284.6" r="1.15" fill="#ff1010"/><circle cx="465.2" cy="284.6" r="1.15" fill="#ff1010"/><circle cx="465.2" cy="295.4" r="1.15" fill="#ff1010"/><circle cx="465.2" cy="300" r="1.15" fill="#ff1010"/><circle cx="465.2" cy="317" r="1.15" fill="#ff1010"/><circle cx="465.2" cy="321.7" r="1.15" fill="#ff1010"/><circle cx="420.3" cy="332.4" r="1.15" fill="#ff1010"/><circle cx="420.3" cy="337.5" r="1.15" fill="#ff1010"/><circle cx="420.3" cy="354.5" r="1.15" fill="#ff1010"/><circle cx="420.3" cy="359.4" r="1.15" fill="#ff1010"/><circle cx="448.7" cy="359.4" r="1.15" fill="#ff1010"/><circle cx="437.3" cy="393" r="1.15" fill="#ff1010"/><circle cx="437.3" cy="384.2" r="1.15" fill="#ff1010"/><circle cx="442.5" cy="384.2" r="1.15" fill="#ff1010"/><circle cx="442.5" cy="398.1" r="1.15" fill="#ff1010"/><circle cx="422.4" cy="398.7" r="1.15" fill="#ff1010"/><circle cx="462" cy="397.6" r="1.15" fill="#ff1010"/><circle cx="454.3" cy="397.6" r="1.15" fill="#ff1010"/><circle cx="425.5" cy="393" r="1.15" fill="#ff1010"/></g></svg>
<div class="a" style="left:682.3px;top:118px;width:111px;height:202px;background:#f0f0f0;box-shadow:0 0 0 0.6px #9aa;"></div>
<div class="a" style="left:682.3px;top:118px;width:111px;height:12.2px;background:#fff;"></div>
<div class="a " style="left:684.5px;top:120.6px;font-size:5.6px;line-height:7px;color:#222;"><svg class="cj" width="22.40" height="5.43" style="opacity:0.725;vertical-align:top;margin-top:0.78px;" fill="none" stroke="#999" stroke-width="1.7"><path transform="translate(0.00,0) scale(0.543)" d="M1.5 1v8M0.3 3.5h3M4 1.2h5v3.6h-5zM4 6.2h5M6.5 6.2v3M4 9h5"/><path transform="translate(5.60,0) scale(0.543)" d="M1 1v8h8M3 2h5v3h-5M5.5 1v8M3 7h6"/><path transform="translate(11.20,0) scale(0.543)" d="M0.8 2h8.4M3 0.8v4M7 0.8v4M1.5 5.5h7v3.5h-7zM5 5.5v3.5"/><path transform="translate(16.80,0) scale(0.543)" d="M1 1.6h8M5 1.6v7M0.6 8.6h8.8M2.5 5h5"/></svg></div>
<svg class="a" style="left:782.5px;top:121px" width="7" height="7"><path d="M1 1l5 5M6 1l-5 5" stroke="#888" stroke-width="0.7"/></svg>
<div class="a" style="left:687px;top:137.2px;width:102.2px;height:57px;box-sizing:border-box;border:1px solid #c8c8c8;box-shadow:inset 1px 1px 0 #fff;"></div>
<div class="a" style="left:689.5px;top:133.5px;width:13px;height:7px;background:#f0f0f0;"></div>
<div class="a " style="left:690.2px;top:134px;font-size:5.6px;line-height:7px;color:#222;"><svg class="cj" width="11.60" height="5.63" style="opacity:0.9425;vertical-align:top;margin-top:0.69px;" fill="none" stroke="#222" stroke-width="1.7"><path transform="translate(0.00,0) scale(0.563)" d="M2 0.8l-1.2 3M1.8 2.5v7M4 1.5h5M4 4.5h5M6.5 1.5v8M4 9h5"/><path transform="translate(5.80,0) scale(0.563)" d="M1.5 1v8M0.3 3.5h3M4 1.2h5v3.6h-5zM4 6.2h5M6.5 6.2v3M4 9h5"/></svg></div>
<div class="a" style="left:692.4px;top:145.8px;width:47px;height:43.8px;background:#3c8dbf;box-shadow:0.8px 0.8px 0 #8a8a8a;"></div>
<div class="a " style="left:745.8px;top:150.5px;font-family:Liberation Serif,serif;font-weight:bold;font-size:5.2px;line-height:6px;color:#333;">X</div>
<div class="a" style="left:750.9px;top:149.3px;width:35px;height:8.2px;box-sizing:border-box;border:1px solid #9a9a9a;border-bottom-color:#e8e8e8;border-right-color:#e8e8e8;background:#f0f0f0;"></div>
<div class="a " style="left:752px;top:150.8px;font-family:Liberation Mono,monospace;font-size:4.9px;line-height:6px;color:#6a6a6a;">0.000</div>
<div class="a " style="left:745.8px;top:160.7px;font-family:Liberation Serif,serif;font-weight:bold;font-size:5.2px;line-height:6px;color:#333;">Y</div>
<div class="a" style="left:750.9px;top:159.5px;width:35px;height:8.2px;box-sizing:border-box;border:1px solid #9a9a9a;border-bottom-color:#e8e8e8;border-right-color:#e8e8e8;background:#f0f0f0;"></div>
<div class="a " style="left:752px;top:161.0px;font-family:Liberation Mono,monospace;font-size:4.9px;line-height:6px;color:#6a6a6a;">400.000</div>
<div class="a " style="left:745.8px;top:169.39999999999998px;font-family:Liberation Serif,serif;font-weight:bold;font-size:5.2px;line-height:6px;color:#333;">Z</div>
<div class="a" style="left:750.9px;top:168.2px;width:35px;height:8.2px;box-sizing:border-box;border:1px solid #9a9a9a;border-bottom-color:#e8e8e8;border-right-color:#e8e8e8;background:#f0f0f0;"></div>
<div class="a " style="left:752px;top:169.7px;font-family:Liberation Mono,monospace;font-size:4.9px;line-height:6px;color:#6a6a6a;">0.000</div>
<div class="a" style="left:745.1px;top:183.1px;width:6.4px;height:6px;box-sizing:border-box;border:1px solid #555;background:#fff;"></div>
<div class="a" style="left:754.1px;top:180.2px;width:31.8px;height:9.4px;background:#a8a8a8;"></div>
<div class="a " style="left:759.5px;top:182.2px;font-size:5.6px;line-height:7px;color:#222;"><svg class="cj" width="22.00" height="5.33" style="opacity:0.87;vertical-align:top;margin-top:0.83px;" fill="none" stroke="#222" stroke-width="1.7"><path transform="translate(0.00,0) scale(0.533)" d="M1 3h4v6M3 1v7l-2 1.5M6 2h3v7h-3z"/><path transform="translate(5.50,0) scale(0.533)" d="M2 0.8l-1.2 3M1.8 2.5v7M4 1.5h5M4 4.5h5M6.5 1.5v8M4 9h5"/><path transform="translate(11.00,0) scale(0.533)" d="M1.5 1v8M0.3 3.5h3M4 1.2h5v3.6h-5zM4 6.2h5M6.5 6.2v3M4 9h5"/><path transform="translate(16.50,0) scale(0.533)" d="M1 1v8h8M3 2h5v3h-5M5.5 1v8M3 7h6"/></svg></div>
<div class="a " style="left:691px;top:207.3px;font-size:5.6px;line-height:7px;color:#222;"><svg class="cj" width="10.80" height="5.24" style="opacity:0.9425;vertical-align:top;margin-top:0.88px;" fill="none" stroke="#222" stroke-width="1.7"><path transform="translate(0.00,0) scale(0.524)" d="M2 1.5l6 7.5M8 1.5l-6 7.5M1 4.5h8M5 0.6v4"/><path transform="translate(5.40,0) scale(0.524)" d="M1 3h4v6M3 1v7l-2 1.5M6 2h3v7h-3z"/></svg></div>
<div class="a" style="left:705.4px;top:209.5px;width:53px;height:1.3px;background:#bdbdbd;"></div>
<div class="a" style="left:714.8px;top:207.3px;width:1.5px;height:5.5px;background:#555;"></div>
<div class="a" style="left:711px;top:209.5px;width:4px;height:1px;background:#777;"></div>
<div class="a" style="left:762.5px;top:206.5px;width:23.1px;height:8.1px;box-sizing:border-box;border:1px solid #9a9a9a;border-bottom-color:#e8e8e8;border-right-color:#e8e8e8;background:#f0f0f0;"></div>
<div class="a " style="left:769.5px;top:208.3px;font-family:Liberation Mono,monospace;font-size:4.9px;line-height:5px;color:#6a6a6a;">7.50</div>
<div class="a" style="left:686px;top:219.7px;width:103px;height:82.7px;box-sizing:border-box;border:1px solid #c8c8c8;box-shadow:inset 1px 1px 0 #fff;"></div>
<div class="a" style="left:689.5px;top:216px;width:13px;height:7px;background:#f0f0f0;"></div>
<div class="a " style="left:690.2px;top:216.2px;font-size:5.6px;line-height:7px;color:#222;"><svg class="cj" width="11.20" height="5.43" style="opacity:0.9425;vertical-align:top;margin-top:0.78px;" fill="none" stroke="#222" stroke-width="1.7"><path transform="translate(0.00,0) scale(0.543)" d="M1 1.8h8M5 0.8v8.4M2 5h6M1 9h8M2.5 2.8l-1.5 6"/><path transform="translate(5.60,0) scale(0.543)" d="M2 1.5l6 7.5M8 1.5l-6 7.5M1 4.5h8M5 0.6v4"/></svg></div>
<div class="a" style="left:721.3px;top:224px;width:14.4px;height:13.8px;box-sizing:border-box;border:1px solid #b4b4b4;border-right-color:#9e9e9e;border-bottom-color:#9e9e9e;background:#f0f0f0;"></div>
<svg class="a" style="left:721.3px;top:224px" width="14.4" height="13.8"><path d="M7.4 2.3L12.4 7h-10z M7.4 5.9L12.4 11.3h-10z" fill="#000080"/></svg>
<div class="a" style="left:721.3px;top:239.4px;width:14.4px;height:13.8px;box-sizing:border-box;border:1px solid #b4b4b4;border-right-color:#9e9e9e;border-bottom-color:#9e9e9e;background:#f0f0f0;"></div>
<svg class="a" style="left:721.3px;top:239.4px" width="14.4" height="13.8"><path d="M7.2 4.3L12.2 9.6h-10z" fill="#000080"/></svg>
<div class="a" style="left:769.8px;top:224px;width:14.4px;height:13.8px;box-sizing:border-box;border:1px solid #b4b4b4;border-right-color:#9e9e9e;border-bottom-color:#9e9e9e;background:#f0f0f0;"></div>
<svg class="a" style="left:769.8px;top:224px" width="14.4" height="13.8"><path d="M7.4 2.3L12.4 7h-10z M7.4 5.9L12.4 11.3h-10z" fill="#000080"/></svg>
<div class="a" style="left:769.8px;top:239.4px;width:14.4px;height:13.8px;box-sizing:border-box;border:1px solid #b4b4b4;border-right-color:#9e9e9e;border-bottom-color:#9e9e9e;background:#f0f0f0;"></div>
<svg class="a" style="left:769.8px;top:239.4px" width="14.4" height="13.8"><path d="M7.2 4.3L12.2 9.6h-10z" fill="#000080"/></svg>
<div class="a" style="left:689.4px;top:254.5px;width:14.4px;height:13.8px;box-sizing:border-box;border:1px solid #b4b4b4;border-right-color:#9e9e9e;border-bottom-color:#9e9e9e;background:#f0f0f0;"></div>
<svg class="a" style="left:689.4px;top:254.5px" width="14.4" height="13.8"><path d="M2.6 7.1L8.8 2.4v9.4z M7.1 7.1L12.3 2.4v9.4z" fill="#000080"/></svg>
<div class="a" style="left:705.3px;top:254.5px;width:14.4px;height:13.8px;box-sizing:border-box;border:1px solid #b4b4b4;border-right-color:#9e9e9e;border-bottom-color:#9e9e9e;background:#f0f0f0;"></div>
<svg class="a" style="left:705.3px;top:254.5px" width="14.4" height="13.8"><path d="M4.4 7.2L10 2.4v9.6z" fill="#000080"/></svg>
<div class="a" style="left:736.5px;top:254.5px;width:14.4px;height:13.8px;box-sizing:border-box;border:1px solid #b4b4b4;border-right-color:#9e9e9e;border-bottom-color:#9e9e9e;background:#f0f0f0;"></div>
<svg class="a" style="left:736.5px;top:254.5px" width="14.4" height="13.8"><path d="M10 7.2L4.4 2.4v9.6z" fill="#000080"/></svg>
<div class="a" style="left:752.2px;top:254.5px;width:14.4px;height:13.8px;box-sizing:border-box;border:1px solid #b4b4b4;border-right-color:#9e9e9e;border-bottom-color:#9e9e9e;background:#f0f0f0;"></div>
<svg class="a" style="left:752.2px;top:254.5px" width="14.4" height="13.8"><path d="M11.8 7.1L5.6 2.4v9.4z M7.3 7.1L2.1 2.4v9.4z" fill="#000080"/></svg>
<div class="a" style="left:721.3px;top:270.7px;width:14.4px;height:13.8px;box-sizing:border-box;border:1px solid #b4b4b4;border-right-color:#9e9e9e;border-bottom-color:#9e9e9e;background:#f0f0f0;"></div>
<svg class="a" style="left:721.3px;top:270.7px" width="14.4" height="13.8"><path d="M7.2 9.6L12.2 4.3h-10z" fill="#000080"/></svg>
<div class="a" style="left:721.3px;top:286.5px;width:14.4px;height:13.8px;box-sizing:border-box;border:1px solid #b4b4b4;border-right-color:#9e9e9e;border-bottom-color:#9e9e9e;background:#f0f0f0;"></div>
<svg class="a" style="left:721.3px;top:286.5px" width="14.4" height="13.8"><path d="M7.4 11.5L12.4 6.8h-10z M7.4 7.9L12.4 2.5h-10z" fill="#000080"/></svg>
<div class="a" style="left:769.8px;top:270.7px;width:14.4px;height:13.8px;box-sizing:border-box;border:1px solid #b4b4b4;border-right-color:#9e9e9e;border-bottom-color:#9e9e9e;background:#f0f0f0;"></div>
<svg class="a" style="left:769.8px;top:270.7px" width="14.4" height="13.8"><path d="M7.2 9.6L12.2 4.3h-10z" fill="#000080"/></svg>
<div class="a" style="left:769.8px;top:286.5px;width:14.4px;height:13.8px;box-sizing:border-box;border:1px solid #b4b4b4;border-right-color:#9e9e9e;border-bottom-color:#9e9e9e;background:#f0f0f0;"></div>
<svg class="a" style="left:769.8px;top:286.5px" width="14.4" height="13.8"><path d="M7.4 11.5L12.4 6.8h-10z M7.4 7.9L12.4 2.5h-10z" fill="#000080"/></svg>
<div class="a " style="left:722.4px;top:259.6px;font-family:Liberation Mono,monospace;font-size:4.9px;line-height:5px;color:#111;letter-spacing:-0.3px;font-weight:bold;">&lt;XY&gt;</div>
<div class="a " style="left:772.5px;top:259.6px;font-family:Liberation Mono,monospace;font-size:4.9px;line-height:5px;color:#111;font-weight:bold;">&lt;Z&gt;</div>
<div class="a " style="left:746.7px;top:276.3px;line-height:6px;"><svg class="cj" width="11.20" height="5.43" style="opacity:1.0;vertical-align:top;margin-top:0.28px;" fill="none" stroke="#30c830" stroke-width="1.7"><path transform="translate(0.00,0) scale(0.543)" d="M1 1.6h8M5 1.6v7M0.6 8.6h8.8M2.5 5h5"/><path transform="translate(5.60,0) scale(0.543)" d="M1 1.8h8M5 0.8v8.4M2 5h6M1 9h8M2.5 2.8l-1.5 6"/></svg></div>
<div class="a " style="left:744.2px;top:282.5px;font-family:Liberation Mono,monospace;font-size:5px;line-height:6px;color:#30c830;">XY:7.5</div>
<div class="a " style="left:744.2px;top:288.3px;font-family:Liberation Mono,monospace;font-size:5px;line-height:6px;color:#30c830;">Z:20.0</div>
<div class="a" style="left:686.4px;top:306px;width:63.6px;height:12.4px;background:#a8a8a8;"></div>
<div class="a " style="left:712.5px;top:309.2px;font-size:5.6px;line-height:7px;color:#222;"><svg class="cj" width="11.60" height="5.63" style="opacity:0.87;vertical-align:top;margin-top:0.69px;" fill="none" stroke="#222" stroke-width="1.7"><path transform="translate(0.00,0) scale(0.563)" d="M0.8 2h8.4M3 0.8v4M7 0.8v4M1.5 5.5h7v3.5h-7zM5 5.5v3.5"/><path transform="translate(5.80,0) scale(0.563)" d="M1 1.6h8M5 1.6v7M0.6 8.6h8.8M2.5 5h5"/></svg></div>
<div class="a" style="left:754px;top:306px;width:35px;height:12.4px;background:#a8a8a8;"></div>
<div class="a " style="left:759.5px;top:309.2px;font-size:5.6px;line-height:7px;color:#222;"><svg class="cj" width="24.00" height="5.82" style="opacity:0.87;vertical-align:top;margin-top:0.59px;" fill="none" stroke="#222" stroke-width="1.7"><path transform="translate(0.00,0) scale(0.582)" d="M1 1v8h8M3 2h5v3h-5M5.5 1v8M3 7h6"/><path transform="translate(6.00,0) scale(0.582)" d="M0.8 2h8.4M3 0.8v4M7 0.8v4M1.5 5.5h7v3.5h-7zM5 5.5v3.5"/><path transform="translate(12.00,0) scale(0.582)" d="M1 1.6h8M5 1.6v7M0.6 8.6h8.8M2.5 5h5"/><path transform="translate(18.00,0) scale(0.582)" d="M1 1.8h8M5 0.8v8.4M2 5h6M1 9h8M2.5 2.8l-1.5 6"/></svg></div>
<div class="a" style="left:326px;top:412px;width:471px;height:2.2px;background:#f0f0f0;"></div>
<div class="a" style="left:326px;top:414.2px;width:471px;height:11.6px;background:#f5f1e5;"></div>
<div class="a" style="left:326px;top:425.8px;width:471px;height:1px;background:#b8b8b8;"></div>
<div class="a" style="left:328.5px;top:413.8px;width:42.2px;height:12px;box-sizing:border-box;border:1px solid #c8c8c8;border-top:none;border-bottom-color:#9a9a9a;background:#f7f7f7;"></div>
<svg class="a" style="left:331px;top:415.5px" width="8" height="8"><rect x="0.4" y="0.4" width="7.2" height="7.2" fill="#7fc0e8" stroke="#6a7a8a" stroke-width="0.6"/><circle cx="4" cy="3.5" r="2" fill="#3a9a2a"/><rect x="0.6" y="5.5" width="6.8" height="2" fill="#5abf3a"/></svg>
<div class="a " style="left:341.3px;top:417px;font-size:5.6px;line-height:7px;color:#222;"><svg class="cj" width="24.00" height="5.82" style="opacity:1.0;vertical-align:top;margin-top:0.59px;" fill="none" stroke="#111" stroke-width="1.7"><path transform="translate(0.00,0) scale(0.582)" d="M1.5 1v8M0.3 3.5h3M4 1.2h5v3.6h-5zM4 6.2h5M6.5 6.2v3M4 9h5"/><path transform="translate(6.00,0) scale(0.582)" d="M1 1v8h8M3 2h5v3h-5M5.5 1v8M3 7h6"/><path transform="translate(12.00,0) scale(0.582)" d="M0.8 2h8.4M3 0.8v4M7 0.8v4M1.5 5.5h7v3.5h-7zM5 5.5v3.5"/><path transform="translate(18.00,0) scale(0.582)" d="M1 1.6h8M5 1.6v7M0.6 8.6h8.8M2.5 5h5"/></svg></div>
<svg class="a" style="left:373px;top:416px" width="8" height="7"><ellipse cx="4" cy="3.8" rx="3.5" ry="2.7" fill="#333"/><circle cx="4.3" cy="4" r="1.3" fill="#40a8b0"/></svg>
<div class="a " style="left:383px;top:417px;font-size:5.6px;line-height:7px;color:#222;"><svg class="cj" width="24.00" height="5.82" style="opacity:0.7975;vertical-align:top;margin-top:0.59px;" fill="none" stroke="#888" stroke-width="1.7"><path transform="translate(0.00,0) scale(0.582)" d="M2 0.8l-1.2 3M1.8 2.5v7M4 1.5h5M4 4.5h5M6.5 1.5v8M4 9h5"/><path transform="translate(6.00,0) scale(0.582)" d="M1.5 1v8M0.3 3.5h3M4 1.2h5v3.6h-5zM4 6.2h5M6.5 6.2v3M4 9h5"/><path transform="translate(12.00,0) scale(0.582)" d="M1 1v8h8M3 2h5v3h-5M5.5 1v8M3 7h6"/><path transform="translate(18.00,0) scale(0.582)" d="M0.8 2h8.4M3 0.8v4M7 0.8v4M1.5 5.5h7v3.5h-7zM5 5.5v3.5"/></svg></div>
<div class="a" style="left:413.3px;top:416px;width:0.8px;height:9px;background:#b0b0b0;"></div>
<svg class="a" style="left:416px;top:415.5px" width="8" height="8"><path d="M4 0.5l3.5 3.5h-1v3.5h-5v-3.5h-1z" fill="#b02020"/><rect x="2.5" y="4.5" width="3" height="3" fill="#e0a020"/></svg>
<div class="a " style="left:426.3px;top:417px;font-size:5.6px;line-height:7px;color:#222;"><svg class="cj" width="23.60" height="5.72" style="opacity:0.7975;vertical-align:top;margin-top:0.64px;" fill="none" stroke="#888" stroke-width="1.7"><path transform="translate(0.00,0) scale(0.572)" d="M1 3h4v6M3 1v7l-2 1.5M6 2h3v7h-3z"/><path transform="translate(5.90,0) scale(0.572)" d="M2 0.8l-1.2 3M1.8 2.5v7M4 1.5h5M4 4.5h5M6.5 1.5v8M4 9h5"/><path transform="translate(11.80,0) scale(0.572)" d="M1.5 1v8M0.3 3.5h3M4 1.2h5v3.6h-5zM4 6.2h5M6.5 6.2v3M4 9h5"/><path transform="translate(17.70,0) scale(0.572)" d="M1 1v8h8M3 2h5v3h-5M5.5 1v8M3 7h6"/></svg></div>
<div class="a" style="left:456px;top:416px;width:0.8px;height:9px;background:#b0b0b0;"></div>
<div class="a" style="left:103px;top:427px;width:694px;height:3.8px;background:#f0f0f0;"></div>
<div class="a" style="left:103px;top:429.5px;width:694px;height:1px;background:#c8c8c8;"></div>
<div class="a" style="left:103.5px;top:430.8px;width:693.5px;height:7px;box-sizing:border-box;border:1px solid #a8a8a8;border-right-color:#8a8a8a;border-bottom-color:#8a8a8a;background:#f0f0f0;"></div>
<div class="a " style="left:105px;top:431.2px;line-height:6px;"><svg class="cj" width="23.60" height="5.72" style="opacity:0.7975;vertical-align:top;margin-top:0.14px;" fill="none" stroke="#222" stroke-width="1.4"><path transform="translate(0.00,0) scale(0.572)" d="M2 1.5l6 7.5M8 1.5l-6 7.5M1 4.5h8M5 0.6v4"/><path transform="translate(5.90,0) scale(0.572)" d="M1 3h4v6M3 1v7l-2 1.5M6 2h3v7h-3z"/><path transform="translate(11.80,0) scale(0.572)" d="M2 0.8l-1.2 3M1.8 2.5v7M4 1.5h5M4 4.5h5M6.5 1.5v8M4 9h5"/><path transform="translate(17.70,0) scale(0.572)" d="M1.5 1v8M0.3 3.5h3M4 1.2h5v3.6h-5zM4 6.2h5M6.5 6.2v3M4 9h5"/></svg></div>
<svg class="a" style="left:781px;top:431.5px" width="16" height="6"><path d="M2 0.8h4M3 0.8v2.5M2 3.3h4M4 3.3v2.2" stroke="#555" stroke-width="1"/><path d="M10.5 1l4 4M14.5 1l-4 4" stroke="#888" stroke-width="0.7"/></svg>
<div class="a" style="left:103px;top:438px;width:694px;height:70px;background:#fff;"></div>
<div class="a" style="left:789.7px;top:438px;width:7.3px;height:70px;background:#f0f0f0;"></div>
<svg class="a" style="left:790.5px;top:441px" width="6" height="4"><path d="M1 3l2-2 2 2" stroke="#555" stroke-width="0.8" fill="none"/></svg>
<svg class="a" style="left:790.5px;top:502.5px" width="6" height="4"><path d="M1 1l2 2 2-2" stroke="#555" stroke-width="0.8" fill="none"/></svg>
<div class="a" style="left:790.5px;top:484.4px;width:5.8px;height:14.4px;background:#c2c2c2;"></div>
<div class="a " style="left:104px;top:439.09999999999997px;font-size:5.4px;line-height:7px;color:#333;font-weight:normal;letter-spacing:-0.05px;">2024-07-23 16:52:01.864</div>
<div class="a " style="left:170.7px;top:439.09999999999997px;font-size:5.34px;line-height:7px;color:#333;letter-spacing:-0.02px;">&lt;--T05,0.000000000,0.010000000,0.010000000,0.010000000,0.000000000</div>
<div class="a " style="left:104px;top:446.53999999999996px;font-size:5.4px;line-height:7px;color:#333;font-weight:normal;letter-spacing:-0.05px;">2024-07-23 16:52:01.934</div>
<div class="a " style="left:170.7px;top:446.64px;line-height:7px;font-size:5.6px;"><svg class="cj" width="40.95" height="5.67" style="opacity:0.754;vertical-align:top;margin-top:0.66px;" fill="none" stroke="#222" stroke-width="1.5"><path transform="translate(0.00,0) scale(0.567)" d="M1 1.8h8M5 0.8v8.4M2 5h6M1 9h8M2.5 2.8l-1.5 6"/><path transform="translate(5.85,0) scale(0.567)" d="M2 1.5l6 7.5M8 1.5l-6 7.5M1 4.5h8M5 0.6v4"/><path transform="translate(11.70,0) scale(0.567)" d="M1 3h4v6M3 1v7l-2 1.5M6 2h3v7h-3z"/><path transform="translate(17.55,0) scale(0.567)" d="M2 0.8l-1.2 3M1.8 2.5v7M4 1.5h5M4 4.5h5M6.5 1.5v8M4 9h5"/><path transform="translate(23.40,0) scale(0.567)" d="M1.5 1v8M0.3 3.5h3M4 1.2h5v3.6h-5zM4 6.2h5M6.5 6.2v3M4 9h5"/><path transform="translate(29.25,0) scale(0.567)" d="M1 1v8h8M3 2h5v3h-5M5.5 1v8M3 7h6"/><path transform="translate(35.10,0) scale(0.567)" d="M0.8 2h8.4M3 0.8v4M7 0.8v4M1.5 5.5h7v3.5h-7zM5 5.5v3.5"/></svg><i style="display:inline-block;width:5.85px"></i><svg class="cj" width="46.80" height="5.67" style="opacity:0.754;vertical-align:top;margin-top:0.66px;" fill="none" stroke="#222" stroke-width="1.5"><path transform="translate(0.00,0) scale(0.567)" d="M1 1.6h8M5 1.6v7M0.6 8.6h8.8M2.5 5h5"/><path transform="translate(5.85,0) scale(0.567)" d="M1 1.8h8M5 0.8v8.4M2 5h6M1 9h8M2.5 2.8l-1.5 6"/><path transform="translate(11.70,0) scale(0.567)" d="M2 1.5l6 7.5M8 1.5l-6 7.5M1 4.5h8M5 0.6v4"/><path transform="translate(17.55,0) scale(0.567)" d="M1 3h4v6M3 1v7l-2 1.5M6 2h3v7h-3z"/><path transform="translate(23.40,0) scale(0.567)" d="M2 0.8l-1.2 3M1.8 2.5v7M4 1.5h5M4 4.5h5M6.5 1.5v8M4 9h5"/><path transform="translate(29.25,0) scale(0.567)" d="M1.5 1v8M0.3 3.5h3M4 1.2h5v3.6h-5zM4 6.2h5M6.5 6.2v3M4 9h5"/><path transform="translate(35.10,0) scale(0.567)" d="M1 1v8h8M3 2h5v3h-5M5.5 1v8M3 7h6"/><path transform="translate(40.95,0) scale(0.567)" d="M0.8 2h8.4M3 0.8v4M7 0.8v4M1.5 5.5h7v3.5h-7zM5 5.5v3.5"/></svg></div>
<div class="a " style="left:104px;top:453.97999999999996px;font-size:5.4px;line-height:7px;color:#d01010;font-weight:bold;letter-spacing:-0.05px;">2024-07-23 16:52:02.014</div>
<div class="a " style="left:170.7px;top:454.08px;line-height:7px;font-size:5.6px;"><svg class="cj" width="43.40" height="6.01" style="opacity:1.0;vertical-align:top;margin-top:0.49px;" fill="none" stroke="#c00000" stroke-width="1.7"><path transform="translate(0.00,0) scale(0.601)" d="M0.8 2h8.4M3 0.8v4M7 0.8v4M1.5 5.5h7v3.5h-7zM5 5.5v3.5"/><path transform="translate(6.20,0) scale(0.601)" d="M1 1.6h8M5 1.6v7M0.6 8.6h8.8M2.5 5h5"/><path transform="translate(12.40,0) scale(0.601)" d="M1 1.8h8M5 0.8v8.4M2 5h6M1 9h8M2.5 2.8l-1.5 6"/><path transform="translate(18.60,0) scale(0.601)" d="M2 1.5l6 7.5M8 1.5l-6 7.5M1 4.5h8M5 0.6v4"/><path transform="translate(24.80,0) scale(0.601)" d="M1 3h4v6M3 1v7l-2 1.5M6 2h3v7h-3z"/><path transform="translate(31.00,0) scale(0.601)" d="M2 0.8l-1.2 3M1.8 2.5v7M4 1.5h5M4 4.5h5M6.5 1.5v8M4 9h5"/><path transform="translate(37.20,0) scale(0.601)" d="M1.5 1v8M0.3 3.5h3M4 1.2h5v3.6h-5zM4 6.2h5M6.5 6.2v3M4 9h5"/></svg></div>
<div class="a " style="left:214.6px;top:454.88px;line-height:7px;font-size:5.6px;font-weight:bold;color:#c00000;letter-spacing:0.3px;">MC...</div>
<div class="a " style="left:104px;top:461.41999999999996px;font-size:5.4px;line-height:7px;color:#d01010;font-weight:bold;letter-spacing:-0.05px;">2024-07-23 16:52:02.842</div>
<div class="a " style="left:170.7px;top:461.52px;line-height:7px;"><svg class="cj" width="50.40" height="6.11" style="opacity:1.0;vertical-align:top;margin-top:0.44px;" fill="none" stroke="#c00000" stroke-width="1.7"><path transform="translate(0.00,0) scale(0.611)" d="M1 1v8h8M3 2h5v3h-5M5.5 1v8M3 7h6"/><path transform="translate(6.30,0) scale(0.611)" d="M0.8 2h8.4M3 0.8v4M7 0.8v4M1.5 5.5h7v3.5h-7zM5 5.5v3.5"/><path transform="translate(12.60,0) scale(0.611)" d="M1 1.6h8M5 1.6v7M0.6 8.6h8.8M2.5 5h5"/><path transform="translate(18.90,0) scale(0.611)" d="M1 1.8h8M5 0.8v8.4M2 5h6M1 9h8M2.5 2.8l-1.5 6"/><path transform="translate(25.20,0) scale(0.611)" d="M2 1.5l6 7.5M8 1.5l-6 7.5M1 4.5h8M5 0.6v4"/><path transform="translate(31.50,0) scale(0.611)" d="M1 3h4v6M3 1v7l-2 1.5M6 2h3v7h-3z"/><path transform="translate(37.80,0) scale(0.611)" d="M2 0.8l-1.2 3M1.8 2.5v7M4 1.5h5M4 4.5h5M6.5 1.5v8M4 9h5"/><path transform="translate(44.10,0) scale(0.611)" d="M1.5 1v8M0.3 3.5h3M4 1.2h5v3.6h-5zM4 6.2h5M6.5 6.2v3M4 9h5"/></svg></div>
<div class="a " style="left:104px;top:468.85999999999996px;font-size:5.4px;line-height:7px;color:#333;font-weight:normal;letter-spacing:-0.05px;">2024-07-23 16:52:27.147</div>
<div class="a " style="left:170.7px;top:468.85999999999996px;font-size:5.34px;line-height:7px;color:#333;letter-spacing:-0.02px;">--&gt;T05</div>
<div class="a " style="left:104px;top:476.29999999999995px;font-size:5.4px;line-height:7px;color:#333;font-weight:normal;letter-spacing:-0.05px;">2024-07-23 16:52:27.160</div>
<div class="a " style="left:170.7px;top:476.29999999999995px;font-size:5.34px;line-height:7px;color:#333;letter-spacing:-0.02px;">&lt;--T05,0.000000000,0.010000000,0.010000000,0.010000000,0.000000000</div>
<div class="a " style="left:104px;top:483.73999999999995px;font-size:5.4px;line-height:7px;color:#333;font-weight:normal;letter-spacing:-0.05px;">2024-07-23 16:52:27.214</div>
<div class="a " style="left:170.7px;top:483.84px;line-height:7px;font-size:5.6px;"><svg class="cj" width="40.95" height="5.67" style="opacity:0.754;vertical-align:top;margin-top:0.66px;" fill="none" stroke="#222" stroke-width="1.5"><path transform="translate(0.00,0) scale(0.567)" d="M1.5 1v8M0.3 3.5h3M4 1.2h5v3.6h-5zM4 6.2h5M6.5 6.2v3M4 9h5"/><path transform="translate(5.85,0) scale(0.567)" d="M1 1v8h8M3 2h5v3h-5M5.5 1v8M3 7h6"/><path transform="translate(11.70,0) scale(0.567)" d="M0.8 2h8.4M3 0.8v4M7 0.8v4M1.5 5.5h7v3.5h-7zM5 5.5v3.5"/><path transform="translate(17.55,0) scale(0.567)" d="M1 1.6h8M5 1.6v7M0.6 8.6h8.8M2.5 5h5"/><path transform="translate(23.40,0) scale(0.567)" d="M1 1.8h8M5 0.8v8.4M2 5h6M1 9h8M2.5 2.8l-1.5 6"/><path transform="translate(29.25,0) scale(0.567)" d="M2 1.5l6 7.5M8 1.5l-6 7.5M1 4.5h8M5 0.6v4"/><path transform="translate(35.10,0) scale(0.567)" d="M1 3h4v6M3 1v7l-2 1.5M6 2h3v7h-3z"/></svg><i style="display:inline-block;width:5.85px"></i><svg class="cj" width="46.80" height="5.67" style="opacity:0.754;vertical-align:top;margin-top:0.66px;" fill="none" stroke="#222" stroke-width="1.5"><path transform="translate(0.00,0) scale(0.567)" d="M2 0.8l-1.2 3M1.8 2.5v7M4 1.5h5M4 4.5h5M6.5 1.5v8M4 9h5"/><path transform="translate(5.85,0) scale(0.567)" d="M1.5 1v8M0.3 3.5h3M4 1.2h5v3.6h-5zM4 6.2h5M6.5 6.2v3M4 9h5"/><path transform="translate(11.70,0) scale(0.567)" d="M1 1v8h8M3 2h5v3h-5M5.5 1v8M3 7h6"/><path transform="translate(17.55,0) scale(0.567)" d="M0.8 2h8.4M3 0.8v4M7 0.8v4M1.5 5.5h7v3.5h-7zM5 5.5v3.5"/><path transform="translate(23.40,0) scale(0.567)" d="M1 1.6h8M5 1.6v7M0.6 8.6h8.8M2.5 5h5"/><path transform="translate(29.25,0) scale(0.567)" d="M1 1.8h8M5 0.8v8.4M2 5h6M1 9h8M2.5 2.8l-1.5 6"/><path transform="translate(35.10,0) scale(0.567)" d="M2 1.5l6 7.5M8 1.5l-6 7.5M1 4.5h8M5 0.6v4"/><path transform="translate(40.95,0) scale(0.567)" d="M1 3h4v6M3 1v7l-2 1.5M6 2h3v7h-3z"/></svg></div>
<div class="a " style="left:104px;top:491.17999999999995px;font-size:5.4px;line-height:7px;color:#d01010;font-weight:bold;letter-spacing:-0.05px;">2024-07-23 16:52:27.289</div>
<div class="a " style="left:170.7px;top:491.28px;line-height:7px;font-size:5.6px;"><svg class="cj" width="43.40" height="6.01" style="opacity:1.0;vertical-align:top;margin-top:0.49px;" fill="none" stroke="#c00000" stroke-width="1.7"><path transform="translate(0.00,0) scale(0.601)" d="M1 3h4v6M3 1v7l-2 1.5M6 2h3v7h-3z"/><path transform="translate(6.20,0) scale(0.601)" d="M2 0.8l-1.2 3M1.8 2.5v7M4 1.5h5M4 4.5h5M6.5 1.5v8M4 9h5"/><path transform="translate(12.40,0) scale(0.601)" d="M1.5 1v8M0.3 3.5h3M4 1.2h5v3.6h-5zM4 6.2h5M6.5 6.2v3M4 9h5"/><path transform="translate(18.60,0) scale(0.601)" d="M1 1v8h8M3 2h5v3h-5M5.5 1v8M3 7h6"/><path transform="translate(24.80,0) scale(0.601)" d="M0.8 2h8.4M3 0.8v4M7 0.8v4M1.5 5.5h7v3.5h-7zM5 5.5v3.5"/><path transform="translate(31.00,0) scale(0.601)" d="M1 1.6h8M5 1.6v7M0.6 8.6h8.8M2.5 5h5"/><path transform="translate(37.20,0) scale(0.601)" d="M1 1.8h8M5 0.8v8.4M2 5h6M1 9h8M2.5 2.8l-1.5 6"/></svg></div>
<div class="a " style="left:214.6px;top:492.08px;line-height:7px;font-size:5.6px;font-weight:bold;color:#c00000;letter-spacing:0.3px;">MC...</div>
<div class="a " style="left:104px;top:498.61999999999995px;font-size:5.4px;line-height:7px;color:#d01010;font-weight:bold;letter-spacing:-0.05px;">2024-07-23 16:52:28.120</div>
<div class="a " style="left:170.7px;top:498.71999999999997px;line-height:7px;"><svg class="cj" width="50.40" height="6.11" style="opacity:1.0;vertical-align:top;margin-top:0.44px;" fill="none" stroke="#c00000" stroke-width="1.7"><path transform="translate(0.00,0) scale(0.611)" d="M2 1.5l6 7.5M8 1.5l-6 7.5M1 4.5h8M5 0.6v4"/><path transform="translate(6.30,0) scale(0.611)" d="M1 3h4v6M3 1v7l-2 1.5M6 2h3v7h-3z"/><path transform="translate(12.60,0) scale(0.611)" d="M2 0.8l-1.2 3M1.8 2.5v7M4 1.5h5M4 4.5h5M6.5 1.5v8M4 9h5"/><path transform="translate(18.90,0) scale(0.611)" d="M1.5 1v8M0.3 3.5h3M4 1.2h5v3.6h-5zM4 6.2h5M6.5 6.2v3M4 9h5"/><path transform="translate(25.20,0) scale(0.611)" d="M1 1v8h8M3 2h5v3h-5M5.5 1v8M3 7h6"/><path transform="translate(31.50,0) scale(0.611)" d="M0.8 2h8.4M3 0.8v4M7 0.8v4M1.5 5.5h7v3.5h-7zM5 5.5v3.5"/><path transform="translate(37.80,0) scale(0.611)" d="M1 1.6h8M5 1.6v7M0.6 8.6h8.8M2.5 5h5"/><path transform="translate(44.10,0) scale(0.611)" d="M1 1.8h8M5 0.8v8.4M2 5h6M1 9h8M2.5 2.8l-1.5 6"/></svg></div>
<div class="a" style="left:103px;top:508px;width:694px;height:11px;background:#f0f0f0;"></div>
<div class="a " style="left:110px;top:511.3px;font-size:6.28px;line-height:7px;color:#333;">&lt;x=-4.1808,y=3.4614&gt;</div>
<div class="a" style="left:742.3px;top:510px;width:14.5px;height:8.4px;box-sizing:border-box;border:1px solid #c8c8c8;border-top-color:#a0a0a0;border-left-color:#a0a0a0;"></div>
<div class="a" style="left:757.7px;top:510px;width:14.5px;height:8.4px;box-sizing:border-box;border:1px solid #c8c8c8;border-top-color:#a0a0a0;border-left-color:#a0a0a0;"></div>
<div class="a" style="left:773.2px;top:510px;width:14.5px;height:8.4px;box-sizing:border-box;border:1px solid #c8c8c8;border-top-color:#a0a0a0;border-left-color:#a0a0a0;"></div>
<div class="a " style="left:760px;top:511.2px;line-height:6px;"><svg class="cj" width="11.00" height="5.33" style="opacity:0.9425;vertical-align:top;margin-top:0.33px;" fill="none" stroke="#222" stroke-width="1.7"><path transform="translate(0.00,0) scale(0.533)" d="M1 1.8h8M5 0.8v8.4M2 5h6M1 9h8M2.5 2.8l-1.5 6"/><path transform="translate(5.50,0) scale(0.533)" d="M2 1.5l6 7.5M8 1.5l-6 7.5M1 4.5h8M5 0.6v4"/></svg></div>
<svg class="a" style="left:789px;top:511px" width="8" height="8"><path d="M7 2L2 7M7 4.5L4.5 7M7 7h-0.5" stroke="#bbb" stroke-width="0.8"/></svg>
</body></html>
